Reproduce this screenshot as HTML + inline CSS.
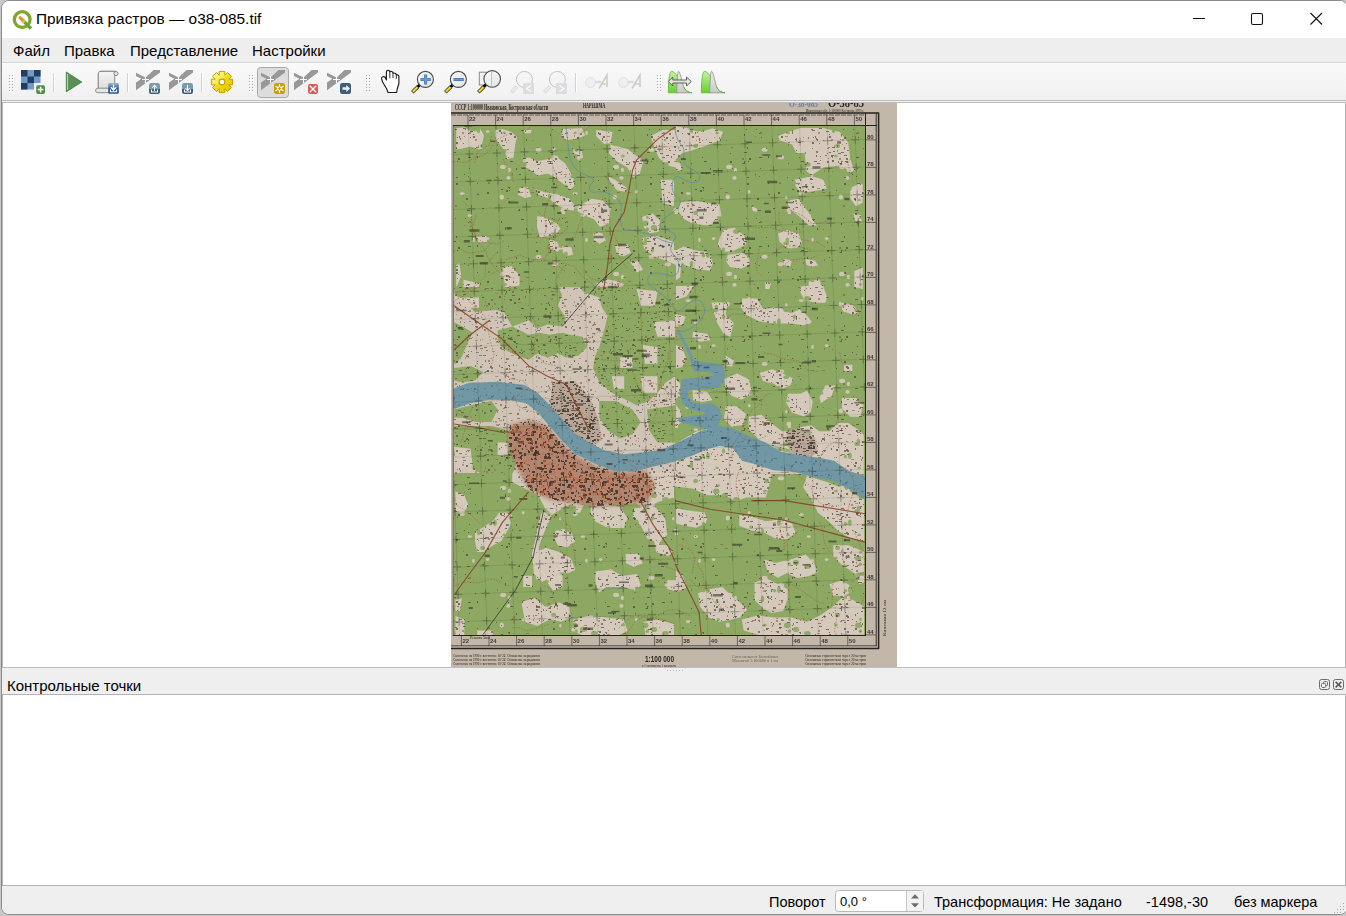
<!DOCTYPE html>
<html><head><meta charset="utf-8">
<style>
*{box-sizing:border-box}
html,body{margin:0;padding:0;width:1346px;height:916px;overflow:hidden;background:#c8c8c8;font-family:"Liberation Sans",sans-serif;color:#000}
.abs{position:absolute}
#win{position:absolute;left:1px;top:0;width:1347px;height:915px;background:#f0f0f0;border:1px solid #8a8a8a;border-radius:8px;overflow:hidden}
#title{position:absolute;left:0;top:0;width:100%;height:37px;background:#fff}
#menu{position:absolute;left:0;top:37px;width:100%;height:25px;background:#eeeeee;border-bottom:1px solid #d6d6d6}
.mi{position:absolute;top:4px;font-size:15px;line-height:17px}
#tb{position:absolute;left:0;top:62px;width:100%;height:38px;background:linear-gradient(#fafafa,#f0f0f0);border-bottom:1px solid #bdbdbd}
#canvas{position:absolute;left:0px;top:101px;width:1344px;height:566px;background:#fff;border-top:1px solid #bdbdbd;border-left:1px solid #b4b4b4;border-right:1px solid #b4b4b4;border-bottom:1px solid #bdbdbd}
#dockt{position:absolute;left:0;top:667px;width:100%;height:27px;background:#efefef}
#dockc{position:absolute;left:0px;top:693px;width:1344px;height:192px;background:#fff;border:1px solid #b4b4b4}
#status{position:absolute;left:0;top:885px;width:100%;height:30px;background:#efefef}
.st{position:absolute;top:8px;font-size:14.5px;line-height:17px;white-space:nowrap}
.grip{position:absolute;width:5px;height:18px;background-image:radial-gradient(circle,#b8b8b8 0.8px,transparent 1px);background-size:3px 3px}
.sep{position:absolute;width:1px;height:19px;top:11px;background:#d0d0d0}
</style></head><body>
<div id="win">
  <div id="title">
    <svg class="abs" style="left:10px;top:9px" width="20" height="20" viewBox="0 0 20 20">
      <circle cx="10.2" cy="9.6" r="7.9" fill="none" stroke="#80a830" stroke-width="3.3"/>
      <path d="M10.5 10 L19 18.6" stroke="#6aa33a" stroke-width="3.4" stroke-linecap="butt"/>
      <path d="M8 7.6 L11 10.6" stroke="#ef8c2c" stroke-width="3" stroke-linecap="round"/><path d="M11 10.6 L12.6 12.2" stroke="#c8d040" stroke-width="3"/>
    </svg>
    <div class="abs" style="left:34px;top:9px;font-size:15.4px;line-height:17px;white-space:nowrap">Привязка растров — o38-085.tif</div>
    <svg class="abs" style="left:1184px;top:5.3px" width="160" height="26" viewBox="0 0 160 26">
      <path d="M7 12.5 H19" stroke="#111" stroke-width="1.1"/>
      <rect x="65.5" y="7.5" width="11" height="11" rx="1.5" fill="none" stroke="#111" stroke-width="1.1"/>
      <path d="M124.5 7 L136 18.5 M136 7 L124.5 18.5" stroke="#111" stroke-width="1.1"/>
    </svg>
  </div>
  <div id="menu">
    <div class="mi" style="left:11px">Файл</div>
    <div class="mi" style="left:62px">Правка</div>
    <div class="mi" style="left:128px">Представление</div>
    <div class="mi" style="left:250px">Настройки</div>
  </div>
  <div id="tb"></div>
  <div id="canvas"></div>
  <div id="dockt">
    <div class="abs" style="left:5px;top:9px;font-size:15px;line-height:17px">Контрольные точки</div>
  </div>
  <div id="dockc"></div>
  <div id="status">
    <div class="st" style="left:767px">Поворот</div>
    <div class="st" style="left:932px">Трансформация: Не задано</div>
    <div class="st" style="left:1144px">-1498,-30</div>
    <div class="st" style="left:1232px">без маркера</div>
  </div>
</div>

<svg class="abs" style="left:0;top:660px" width="1346" height="256" viewBox="0 660 1346 256">
  <!-- splitter dots -->
  <g fill="#b4b4b4"><rect x="667" y="670" width="1" height="1"/><rect x="670" y="670" width="1" height="1"/><rect x="673" y="670" width="1" height="1"/><rect x="676" y="670" width="1" height="1"/><rect x="679" y="670" width="1" height="1"/><rect x="682" y="670" width="1" height="1"/></g>
  <!-- dock buttons -->
  <rect x="1319.5" y="679.5" width="10" height="10" rx="2" fill="none" stroke="#6a6a6a" stroke-width="1"/>
  <rect x="1323.5" y="681.5" width="4" height="4.2" rx="1" fill="none" stroke="#6a6a6a" stroke-width="1"/>
  <rect x="1321.5" y="683.3" width="4.2" height="4.2" rx="1" fill="#f4f4f4" stroke="#6a6a6a" stroke-width="1"/>
  <rect x="1333.5" y="679.5" width="10" height="10" rx="2" fill="none" stroke="#6a6a6a" stroke-width="1"/>
  <path d="M1335.6,681.8 L1341.4,687.4 M1341.4,681.8 L1335.6,687.4" stroke="#5e5e5e" stroke-width="1.6"/>
  <!-- spinbox -->
  <rect x="835.5" y="890.5" width="88" height="21" rx="3" fill="#fff" stroke="#b9b9b9" stroke-width="1"/>
  <rect x="906.5" y="891" width="16.5" height="20" fill="#f3f3f3"/>
  <path d="M906.5,891 V911" stroke="#c8c8c8" stroke-width="1"/>
  <path d="M915,894.3 L919,898.6 H911 Z M915,907.6 L919,903.3 H911 Z" fill="#6b6b6b"/>
  <text x="840" y="906" font-family="Liberation Sans" font-size="13" fill="#000">0,0 °</text>
  <!-- size grip -->
  <g fill="#a8a8a8"><rect x="1343" y="903" width="1" height="1"/><rect x="1340" y="906" width="1" height="1"/><rect x="1343" y="906" width="1" height="1"/><rect x="1337" y="909" width="1" height="1"/><rect x="1340" y="909" width="1" height="1"/><rect x="1343" y="909" width="1" height="1"/><rect x="1334" y="912" width="1" height="1"/><rect x="1337" y="912" width="1" height="1"/><rect x="1340" y="912" width="1" height="1"/></g>
</svg>

<!--MAP-->
<svg class="abs" style="left:0;top:0" width="1346" height="680" viewBox="0 0 1346 680">
<defs><filter id="soft" x="0" y="0" width="1" height="1"><feGaussianBlur stdDeviation="0.45"/></filter><filter id="tblur" x="480" y="400" width="200" height="130" filterUnits="userSpaceOnUse"><feGaussianBlur stdDeviation="2"/></filter><filter id="erode" x="445" y="95" width="460" height="580" filterUnits="userSpaceOnUse"><feMorphology operator="erode" radius="0.8"/></filter><clipPath id="mapclip"><rect x="451" y="103" width="446" height="564"/></clipPath><clipPath id="gclip"><rect x="453.5" y="125" width="412.5" height="510.5"/></clipPath><clipPath id="t3clip"><rect x="453.5" y="287" width="221.5" height="186"/></clipPath><clipPath id="lclip"><path d="M455.2,127.0 L465.6,125.9 L472.8,131.1 L481.1,127.0 L485.3,135.3 L483.2,144.6 L486.3,148.7 L479.0,150.8 L470.7,147.7 L462.4,149.8 L455.2,150.8Z M494.6,129.0 L503.9,128.0 L512.2,131.1 L518.4,136.3 L516.4,144.6 L514.3,160.1 L506.0,160.1 L503.9,151.8 L499.8,146.7 L494.6,139.4Z M521.5,129.0 L533.0,129.0 L531.9,134.2 L523.6,134.2Z M522.6,158.1 L528.8,156.0 L537.1,160.1 L547.5,158.1 L557.8,156.0 L566.1,162.2 L574.4,176.7 L575.5,187.1 L570.3,191.2 L559.9,183.0 L553.7,178.8 L547.5,174.7 L537.1,176.7 L528.8,170.5 L521.5,166.4Z M549.5,145.6 L557.8,147.7 L555.8,151.8 L551.6,151.8Z M572.4,147.7 L582.7,149.8 L584.8,160.1 L578.6,162.2 L572.4,156.0Z M562.0,128.0 L582.7,127.0 L586.9,136.3 L578.6,139.4 L566.1,141.5 L559.9,137.3Z M595.2,129.0 L613.8,131.1 L611.8,143.6 L603.5,145.6 L595.2,137.3Z M609.7,143.6 L628.3,147.7 L636.6,153.9 L644.9,160.1 L640.8,174.7 L632.5,178.8 L626.3,168.4 L615.9,162.2 L607.6,153.9Z M603.5,172.6 L615.9,178.8 L628.3,187.1 L626.3,193.3 L615.9,191.2 L609.7,183.0Z M518.4,187.1 L528.8,186.1 L533.0,197.5 L524.7,199.5 L516.4,195.4Z M533.0,187.1 L545.4,191.2 L557.8,193.3 L570.3,197.5 L576.5,205.8 L574.4,212.0 L564.1,209.9 L555.8,205.8 L547.5,199.5 L537.1,195.4Z M536.1,215.1 L545.4,216.1 L557.8,222.4 L562.0,228.6 L557.8,234.8 L547.5,236.9 L539.2,238.9 L536.1,228.6Z M547.5,236.9 L557.8,241.0 L562.0,249.3 L557.8,253.5 L549.5,249.3Z M560.9,245.2 L572.4,246.2 L574.4,255.5 L566.1,257.6 L562.0,253.5Z M576.5,205.8 L591.0,197.5 L603.5,199.5 L611.8,207.8 L609.7,224.4 L599.3,228.6 L593.1,220.3 L582.7,216.1 L576.5,212.0Z M591.0,228.6 L603.5,232.7 L607.6,241.0 L599.3,245.2 L593.1,241.0Z M613.8,245.2 L628.3,243.1 L632.5,253.5 L624.2,257.6 L615.9,255.5Z M640.8,216.1 L653.2,212.0 L661.5,220.3 L659.5,232.7 L649.1,234.8 L642.9,228.6Z M649.1,135.3 L661.5,129.0 L675.0,129.0 L675.0,168.4 L665.7,166.4 L657.4,158.1 L653.2,147.7Z M659.5,178.8 L675.0,178.8 L675.0,207.8 L661.5,203.7Z M640.8,236.9 L657.4,234.8 L675.0,241.0 L675.0,265.9 L665.7,261.8 L653.2,257.6 L642.9,249.3Z M455.2,263.8 L460.4,261.8 L462.4,276.3 L458.3,286.6 L455.2,288.7Z M501.8,265.9 L512.2,264.9 L520.5,274.2 L520.5,286.6 L503.9,288.7Z M462.4,278.3 L481.1,282.5 L479.0,290.0 L462.4,290.0Z M595.2,282.5 L607.6,278.3 L620.1,280.4 L622.1,290.0 L595.2,290.0Z M474.9,235.8 L487.3,234.8 L488.4,243.1 L477.0,243.1Z M628.3,261.8 L638.7,259.7 L644.9,270.1 L636.6,274.2Z M675.0,124.9 L687.4,127.0 L699.9,131.1 L712.3,127.0 L724.8,131.1 L720.6,141.5 L704.0,147.7 L691.6,151.8 L683.3,153.9 L675.0,162.2Z M675.0,160.1 L681.2,162.2 L683.3,170.5 L677.1,172.6 L675.0,170.5Z M776.6,135.3 L787.0,131.1 L799.4,127.0 L824.3,127.0 L840.9,131.1 L849.2,141.5 L851.3,158.1 L855.4,170.5 L851.3,174.7 L840.9,166.4 L824.3,168.4 L811.9,176.7 L805.7,172.6 L803.6,153.9 L795.3,153.9 L791.1,145.6 L778.7,141.5Z M793.2,178.8 L803.6,176.7 L811.9,174.7 L824.3,178.8 L828.5,189.2 L820.2,191.2 L807.7,193.3 L797.4,191.2 L793.2,185.0Z M787.0,199.5 L799.4,197.5 L809.8,212.0 L816.0,222.4 L820.2,226.5 L807.7,226.5 L799.4,218.2 L791.1,212.0 L787.0,205.8Z M679.1,201.6 L693.7,199.5 L706.1,201.6 L720.6,203.7 L722.7,216.1 L716.5,224.4 L706.1,226.5 L691.6,224.4 L683.3,220.3 L677.1,212.0Z M749.7,203.7 L758.0,207.8 L758.0,213.0 L751.7,212.0Z M722.7,228.6 L735.1,226.5 L745.5,234.8 L747.6,245.2 L735.1,251.4 L722.7,253.5 L716.5,245.2 L718.6,236.9Z M776.6,232.7 L787.0,228.6 L799.4,232.7 L803.6,243.1 L797.4,249.3 L787.0,249.3 L778.7,243.1Z M683.3,245.2 L695.7,249.3 L710.3,251.4 L714.4,263.8 L710.3,272.1 L695.7,270.1 L683.3,265.9 L679.1,255.5Z M726.8,253.5 L743.4,251.4 L751.7,257.6 L749.7,265.9 L741.4,270.1 L728.9,268.0 L724.8,261.8Z M803.6,257.6 L816.0,259.7 L820.2,265.9 L811.9,268.0 L805.7,265.9Z M849.2,187.1 L857.5,183.0 L863.7,183.0 L863.7,203.7 L855.4,207.8 L849.2,199.5Z M851.3,212.0 L861.6,214.1 L863.7,224.4 L855.4,224.4Z M764.2,280.4 L772.5,282.5 L770.4,290.0 L764.2,290.0Z M807.7,280.4 L820.2,278.3 L824.3,290.0 L807.7,290.0Z M853.3,270.1 L863.7,265.9 L863.7,290.0 L853.3,290.0Z M675.0,249.3 L683.3,245.2 L681.2,278.3 L675.0,282.5Z M782.8,257.6 L793.2,259.7 L791.1,268.0 L782.8,265.9Z M675.0,285.0 L695.7,285.0 L687.4,297.4 L675.0,301.6Z M675.0,312.0 L687.4,316.1 L683.3,326.5 L675.0,328.6Z M710.3,301.6 L728.9,301.6 L726.8,314.0 L735.1,322.3 L731.0,338.9 L722.7,334.8 L716.5,324.4 L712.3,312.0Z M741.4,297.4 L758.0,297.4 L764.2,307.8 L778.7,305.7 L791.1,312.0 L799.4,307.8 L807.7,314.0 L813.9,322.3 L803.6,326.5 L791.1,324.4 L772.5,324.4 L758.0,322.3 L745.5,316.1 L739.3,307.8Z M799.4,285.0 L824.3,285.0 L828.5,297.4 L826.4,303.7 L816.0,303.7 L803.6,301.6 L799.4,293.3Z M675.0,343.1 L683.3,347.2 L687.4,357.6 L683.3,368.0 L675.0,370.0Z M691.6,330.6 L708.2,332.7 L712.3,341.0 L699.9,343.1 L691.6,338.9Z M724.8,353.4 L735.1,359.7 L733.1,368.0 L722.7,365.9Z M758.0,372.1 L772.5,368.0 L782.8,372.1 L795.3,378.3 L791.1,386.6 L780.8,390.8 L772.5,384.5 L762.1,382.5Z M722.7,378.3 L737.2,372.1 L749.7,378.3 L753.8,394.9 L741.4,401.1 L731.0,397.0 L724.8,390.8Z M691.6,388.7 L708.2,390.8 L714.4,401.1 L702.0,403.2 L691.6,401.1Z M787.0,392.8 L799.4,392.8 L807.7,388.7 L813.9,401.1 L811.9,413.6 L803.6,417.7 L791.1,413.6 L784.9,403.2Z M724.8,405.3 L737.2,405.3 L747.6,413.6 L743.4,426.0 L731.0,428.1 L722.7,419.8Z M747.6,415.7 L762.1,413.6 L772.5,421.9 L782.8,430.2 L791.1,430.2 L799.4,426.0 L811.9,423.9 L820.2,430.2 L828.5,430.2 L836.8,421.9 L849.2,421.9 L861.6,430.2 L864.8,434.3 L864.8,475.0 L851.3,475.0 L840.9,467.5 L824.3,461.3 L807.7,457.1 L791.1,450.9 L774.5,446.8 L758.0,440.5 L747.6,430.2Z M824.3,384.5 L836.8,384.5 L832.6,397.0 L820.2,405.3 L818.1,397.0Z M840.9,397.0 L857.5,397.0 L863.7,405.3 L861.6,417.7 L849.2,417.7 L840.9,409.4Z M840.9,301.6 L853.3,303.7 L861.6,312.0 L853.3,316.1 L840.9,312.0Z M843.0,363.8 L853.3,363.8 L853.3,372.1 L843.0,372.1Z M675.0,376.2 L681.2,382.5 L681.2,397.0 L675.0,401.1Z M675.0,442.6 L695.7,430.2 L716.5,426.0 L737.2,430.2 L758.0,440.5 L778.7,448.8 L799.4,454.0 L820.2,461.3 L847.1,470.6 L857.5,475.0 L675.0,475.0Z M675.0,401.1 L681.2,409.4 L683.3,421.9 L675.0,430.2Z M454.4,489.7 L465.3,494.0 L469.7,504.9 L465.3,513.7 L454.4,513.7Z M474.0,531.2 L491.5,520.2 L500.2,509.3 L513.3,513.7 L511.2,526.8 L502.4,542.1 L493.7,546.5 L484.9,553.0 L476.2,553.0 L474.0,542.1Z M511.2,470.0 L675.0,470.0 L675.0,498.4 L659.7,502.8 L646.6,509.3 L635.7,504.9 L616.0,502.8 L602.9,507.1 L585.4,502.8 L572.3,504.9 L563.6,509.3 L552.7,515.9 L543.9,509.3 L537.4,496.2 L524.3,489.7 L511.2,483.1Z M589.8,504.9 L620.4,504.9 L629.1,518.1 L624.7,529.0 L607.3,529.0 L594.2,522.4 L589.8,513.7Z M633.5,507.1 L655.3,504.9 L666.3,518.1 L668.4,535.5 L659.7,544.3 L646.6,539.9 L640.0,526.8 L631.3,518.1Z M653.1,542.1 L668.4,544.3 L675.0,553.0 L668.4,557.4 L655.3,553.0Z M554.8,529.0 L572.3,531.2 L576.7,542.1 L568.0,548.6 L557.0,546.5 L552.7,537.7Z M530.8,553.0 L546.1,546.5 L559.2,550.8 L572.3,557.4 L576.7,570.5 L568.0,574.8 L559.2,572.7 L550.5,579.2 L541.7,583.6 L533.0,574.8Z M554.8,570.5 L563.6,574.8 L563.6,588.0 L552.7,592.3 L546.1,583.6Z M519.9,601.1 L535.2,596.7 L546.1,605.4 L559.2,601.1 L570.1,605.4 L572.3,618.5 L561.4,622.9 L550.5,620.7 L537.4,627.3 L524.3,622.9Z M522.1,574.8 L533.0,574.8 L533.0,588.0 L522.1,588.0Z M594.2,570.5 L611.6,568.3 L622.6,574.8 L637.9,572.7 L642.2,585.8 L635.7,592.3 L622.6,588.0 L607.3,588.0 L598.5,594.5 L594.2,583.6Z M624.7,553.0 L640.0,553.0 L644.4,563.9 L633.5,568.3 L624.7,563.9Z M572.3,618.5 L589.8,614.2 L607.3,616.4 L624.7,618.5 L629.1,631.6 L620.4,636.0 L602.9,636.0 L581.1,636.0 L570.1,631.6Z M454.4,598.9 L463.1,596.7 L460.9,612.0 L454.4,612.0Z M454.4,614.2 L465.3,618.5 L465.3,636.0 L454.4,636.0Z M666.3,579.2 L675.0,579.2 L675.0,592.3 L666.3,590.1Z M642.2,620.7 L657.5,618.5 L675.0,622.9 L675.0,636.0 L644.4,636.0Z M476.2,629.5 L493.7,629.5 L493.7,636.0 L476.2,636.0Z M572.3,500.6 L585.4,504.9 L581.1,513.7 L572.3,513.7Z M541.7,509.3 L552.7,515.9 L546.1,531.2 L541.7,542.1 L537.4,557.4 L530.8,553.0 L535.2,535.5 L537.4,520.2Z M675.0,470.0 L773.3,470.0 L771.1,483.1 L766.7,498.4 L747.1,498.4 L736.2,502.8 L723.1,496.2 L705.6,496.2 L692.5,489.7 L675.0,487.5Z M806.1,474.4 L827.9,480.9 L849.7,489.7 L865.0,498.4 L865.0,542.1 L849.7,539.9 L836.6,531.2 L827.9,522.4 L817.0,513.7 L810.4,500.6 L801.7,487.5Z M675.0,507.1 L688.1,509.3 L705.6,511.5 L709.9,522.4 L696.8,529.0 L683.7,526.8 L675.0,524.6Z M738.3,513.7 L753.6,515.9 L766.7,520.2 L779.8,518.1 L793.0,522.4 L797.3,533.3 L788.6,539.9 L775.5,539.9 L762.4,533.3 L749.3,531.2 L738.3,526.8Z M832.3,544.3 L849.7,544.3 L865.0,550.8 L865.0,572.7 L854.1,574.8 L841.0,566.1 L832.3,557.4Z M762.4,557.4 L775.5,561.7 L793.0,557.4 L806.1,553.0 L814.8,561.7 L819.2,572.7 L810.4,577.0 L797.3,579.2 L786.4,574.8 L777.7,579.2 L766.7,572.7Z M675.0,568.3 L683.7,574.8 L688.1,588.0 L679.4,592.3 L675.0,592.3Z M696.8,592.3 L709.9,588.0 L723.1,585.8 L731.8,594.5 L740.5,601.1 L749.3,609.8 L740.5,618.5 L731.8,620.7 L718.7,622.9 L707.8,618.5 L699.0,607.6Z M753.6,581.4 L766.7,577.0 L779.8,583.6 L788.6,588.0 L788.6,601.1 L784.2,612.0 L771.1,614.2 L762.4,609.8 L753.6,601.1Z M740.5,618.5 L758.0,614.2 L775.5,616.4 L793.0,616.4 L806.1,620.7 L819.2,614.2 L832.3,605.4 L841.0,596.7 L854.1,598.9 L865.0,605.4 L865.0,636.0 L827.9,636.0 L784.2,636.0 L758.0,636.0 L742.7,631.6Z M827.9,583.6 L841.0,579.2 L849.7,583.6 L854.1,592.3 L845.4,596.7 L832.3,596.7Z M854.1,574.8 L865.0,574.8 L865.0,583.6 L858.5,585.8Z"/></clipPath><clipPath id="l3clip"><path d="M636.6,289.1 L657.4,291.2 L655.3,305.7 L640.8,305.7Z M653.2,322.3 L675.0,320.3 L675.0,336.8 L657.4,336.8Z M620.1,357.6 L632.5,357.6 L632.5,368.0 L620.1,368.0Z M642.9,345.1 L657.4,347.2 L657.4,363.8 L644.9,363.8Z M611.8,376.2 L624.2,376.2 L624.2,388.7 L613.8,388.7Z M640.8,376.2 L657.4,376.2 L657.4,392.8 L642.9,392.8Z M586.9,293.3 L599.3,297.4 L603.5,314.0 L595.2,320.3 L586.9,309.9Z M454.1,446.8 L470.7,448.8 L472.8,467.5 L456.2,467.5Z M497.7,442.6 L508.1,442.6 L508.1,455.1 L497.7,455.1Z M458.3,297.4 L479.0,297.4 L479.0,307.8 L462.4,307.8Z"/></clipPath><clipPath id="tclip"><path d="M510.0,425.0 L530.0,420.0 L545.0,425.0 L556.0,436.0 L566.0,448.0 L580.0,458.0 L600.0,468.0 L625.0,472.0 L645.0,470.0 L655.0,485.0 L648.0,503.0 L620.0,505.0 L595.0,506.0 L572.0,503.0 L550.0,500.0 L530.0,490.0 L518.0,470.0 L508.0,445.0Z"/></clipPath><clipPath id="dclip"><path d="M553.0,382.0 L575.0,381.0 L590.0,398.0 L598.0,418.0 L602.0,440.0 L590.0,447.0 L575.0,437.0 L562.0,422.0 L550.0,405.0Z M786.0,432.0 L800.0,428.0 L815.0,438.0 L818.0,452.0 L806.0,460.0 L790.0,456.0Z"/></clipPath><pattern id="fragL" x="0" y="0" width="113" height="107" patternUnits="userSpaceOnUse"><g fill="#d5c9bc"><ellipse cx="51.1" cy="59.9" rx="3.0" ry="2.1"/><ellipse cx="57.4" cy="62.9" rx="1.6" ry="2.2"/><ellipse cx="71.2" cy="84.8" rx="1.4" ry="1.8"/><ellipse cx="10.2" cy="86.6" rx="2.6" ry="1.3"/><ellipse cx="111.0" cy="103.2" rx="2.5" ry="2.4"/><ellipse cx="17.8" cy="1.6" rx="2.3" ry="1.3"/><ellipse cx="21.5" cy="25.9" rx="1.3" ry="2.1"/><ellipse cx="49.8" cy="90.1" rx="2.2" ry="2.5"/><ellipse cx="56.5" cy="70.9" rx="2.1" ry="1.8"/><ellipse cx="112.7" cy="106.5" rx="2.9" ry="2.6"/><ellipse cx="35.6" cy="24.6" rx="1.8" ry="1.3"/><ellipse cx="86.6" cy="42.8" rx="2.9" ry="2.0"/><ellipse cx="108.3" cy="90.7" rx="1.2" ry="1.6"/><ellipse cx="102.9" cy="50.3" rx="3.2" ry="2.0"/></g></pattern><pattern id="fragG" x="0" y="0" width="71" height="67" patternUnits="userSpaceOnUse"><g fill="#8ca862"><ellipse cx="5.2" cy="42.2" rx="2.9" ry="1.9"/><ellipse cx="6.2" cy="22.3" rx="3.3" ry="2.9"/><ellipse cx="8.4" cy="16.5" rx="1.5" ry="1.4"/><ellipse cx="56.6" cy="11.9" rx="2.5" ry="2.2"/><ellipse cx="13.5" cy="49.0" rx="1.6" ry="2.7"/><ellipse cx="8.3" cy="28.2" rx="1.7" ry="1.9"/><ellipse cx="68.9" cy="53.8" rx="1.9" ry="3.2"/><ellipse cx="15.0" cy="26.4" rx="3.1" ry="2.6"/><ellipse cx="7.1" cy="66.3" rx="1.7" ry="1.8"/><ellipse cx="54.9" cy="22.0" rx="1.9" ry="1.5"/><ellipse cx="6.4" cy="39.0" rx="1.8" ry="2.6"/><ellipse cx="26.4" cy="30.4" rx="3.3" ry="2.3"/><ellipse cx="40.8" cy="58.1" rx="1.7" ry="1.6"/><ellipse cx="64.5" cy="54.8" rx="1.8" ry="1.7"/><ellipse cx="52.5" cy="63.0" rx="1.7" ry="3.3"/></g></pattern><pattern id="spW" x="0" y="0" width="59" height="43" patternUnits="userSpaceOnUse"><path d="M56,30h2v2h-2zM26,3h1v1h-1zM2,32h2v1h-2zM33,11h3v1h-3zM41,39h2v2h-2zM28,15h1v1h-1zM46,33h2v2h-2zM19,20h1v1h-1zM38,5h1v2h-1zM42,31h2v1h-2zM39,12h2v2h-2zM14,37h2v1h-2zM53,2h3v1h-3zM28,20h1v1h-1zM19,41h2v2h-2zM12,1h2v1h-2zM16,11h3v1h-3zM33,32h2v2h-2zM29,12h3v1h-3zM20,41h1v1h-1zM46,41h3v1h-3zM13,15h1v2h-1zM58,1h1v1h-1zM21,8h1v2h-1zM42,24h2v2h-2zM17,36h1v2h-1zM0,38h1v2h-1z" fill="#4f6f90"/><path d="M47,25h2v1h-2zM52,38h1v2h-1zM1,4h2v1h-2zM36,8h1v1h-1zM37,2h1v1h-1zM58,22h3v1h-3zM4,28h2v2h-2zM45,8h2v1h-2zM5,30h1v1h-1zM0,39h3v1h-3zM37,29h1v2h-1zM48,32h1v1h-1zM48,21h3v1h-3zM31,15h2v1h-2zM27,12h1v1h-1zM8,8h1v2h-1zM17,10h1v1h-1zM30,17h1v1h-1zM24,40h2v2h-2zM45,17h2v2h-2zM41,8h1v2h-1zM34,41h3v1h-3zM4,12h1v1h-1zM2,11h1v1h-1zM25,14h1v1h-1zM57,24h1v1h-1zM56,32h2v1h-2zM19,34h2v1h-2zM5,2h1v2h-1zM35,26h2v1h-2zM53,35h2v1h-2z" fill="#5a7a98"/><path d="M8,14h1v2h-1zM17,13h1v1h-1zM11,18h2v1h-2zM8,28h2v1h-2zM2,1h2v2h-2zM4,30h1v1h-1zM47,2h3v1h-3zM50,1h1v2h-1zM24,37h1v1h-1zM4,5h1v1h-1zM7,16h1v2h-1zM21,24h3v1h-3zM53,34h1v1h-1zM14,7h1v2h-1zM23,19h1v1h-1zM42,16h1v1h-1zM43,20h3v1h-3zM17,38h1v1h-1zM49,9h1v1h-1zM7,28h1v1h-1zM48,30h2v2h-2zM49,22h2v2h-2zM24,35h2v2h-2zM58,1h2v1h-2zM27,2h1v1h-1zM33,33h3v1h-3zM28,31h2v2h-2zM5,14h1v2h-1zM35,18h3v1h-3zM40,10h2v2h-2zM19,9h2v2h-2zM26,34h1v1h-1z" fill="#3f5f80"/></pattern><pattern id="spG" x="0" y="0" width="97" height="89" patternUnits="userSpaceOnUse"><path d="M68,5h2v2h-2zM69,72h1v1h-1zM11,88h1v1h-1zM68,58h1v2h-1zM34,31h1v2h-1zM16,43h1v2h-1zM67,40h1v1h-1zM53,79h1v1h-1zM16,2h1v1h-1zM36,41h3v1h-3zM31,79h1v2h-1zM79,32h3v1h-3zM89,67h1v2h-1zM78,20h2v2h-2zM80,68h3v1h-3zM80,44h1v1h-1zM77,40h1v1h-1zM24,12h1v1h-1zM16,11h2v1h-2zM90,16h1v1h-1zM80,87h1v1h-1zM25,72h3v1h-3zM24,9h1v2h-1zM65,72h1v2h-1zM24,23h1v1h-1zM12,74h1v1h-1zM87,59h1v1h-1zM41,50h1v2h-1zM65,45h1v2h-1zM89,5h1v1h-1zM21,12h2v2h-2zM51,72h2v2h-2zM64,74h2v1h-2zM20,51h1v1h-1zM68,88h2v1h-2zM23,9h2v1h-2zM60,12h1v1h-1zM81,79h1v1h-1zM34,85h2v1h-2zM23,68h1v1h-1zM65,63h3v1h-3zM2,14h2v2h-2zM94,30h2v1h-2zM51,64h1v1h-1zM82,48h1v1h-1zM33,32h2v1h-2zM70,69h2v2h-2zM76,85h1v1h-1zM20,49h1v2h-1z" fill="#3a3826"/><path d="M19,29h1v1h-1zM63,74h1v1h-1zM48,81h1v2h-1zM67,27h2v2h-2zM75,17h1v1h-1zM12,55h1v2h-1zM46,14h3v1h-3zM81,43h2v2h-2zM3,4h2v2h-2zM22,20h2v1h-2zM76,47h1v1h-1zM52,58h2v1h-2zM47,51h1v1h-1zM41,10h3v1h-3zM35,14h3v1h-3zM23,51h1v1h-1zM27,84h1v2h-1zM89,15h1v2h-1zM66,72h1v1h-1zM56,82h1v1h-1zM63,69h2v2h-2z" fill="#8a5a3a"/></pattern><pattern id="spL" x="0" y="0" width="89" height="83" patternUnits="userSpaceOnUse"><path d="M84,37h1v1h-1zM31,74h1v1h-1zM32,31h1v1h-1zM59,18h1v1h-1zM16,30h1v2h-1zM35,34h2v2h-2zM81,35h1v1h-1zM31,64h3v1h-3zM87,5h3v1h-3zM3,79h1v1h-1zM28,69h2v1h-2zM11,20h2v2h-2zM63,17h1v1h-1zM54,33h1v2h-1zM37,70h3v1h-3zM54,47h2v2h-2zM59,41h1v1h-1zM87,59h2v1h-2zM9,39h1v1h-1zM84,41h2v1h-2zM40,28h1v2h-1zM10,46h2v1h-2zM69,19h2v2h-2zM2,28h2v2h-2zM69,10h2v1h-2zM35,13h2v1h-2zM3,81h3v1h-3zM12,54h1v1h-1zM68,9h3v1h-3zM11,59h2v2h-2zM67,46h3v1h-3zM14,53h1v2h-1zM87,21h2v1h-2zM14,38h3v1h-3zM22,7h1v2h-1zM23,35h1v2h-1zM28,51h1v1h-1zM77,20h1v2h-1zM41,18h2v1h-2zM81,79h2v1h-2zM19,73h1v1h-1zM26,19h1v1h-1zM45,34h2v2h-2zM2,24h1v2h-1zM87,11h1v2h-1zM59,8h2v1h-2zM86,59h3v1h-3zM60,30h2v1h-2zM58,1h3v1h-3zM71,11h2v1h-2zM25,48h3v1h-3zM11,13h1v1h-1zM16,80h3v1h-3zM23,24h1v2h-1zM59,75h3v1h-3zM12,29h1v1h-1zM15,55h1v2h-1zM43,54h2v2h-2zM61,42h1v2h-1zM31,77h2v2h-2zM13,78h3v1h-3zM32,68h2v1h-2zM45,78h2v2h-2zM73,25h2v2h-2zM72,3h3v1h-3zM59,15h1v2h-1zM30,72h2v2h-2zM76,18h1v1h-1zM21,23h2v2h-2zM58,4h1v2h-1zM78,75h3v1h-3zM15,72h1v2h-1zM31,72h2v1h-2zM82,4h3v1h-3zM51,63h2v2h-2zM55,15h2v2h-2zM53,3h2v1h-2zM76,41h2v1h-2zM31,15h1v2h-1zM88,13h2v2h-2zM69,53h2v2h-2zM28,53h2v2h-2zM9,12h2v2h-2zM3,41h1v1h-1zM18,45h3v1h-3zM18,60h1v1h-1zM45,60h1v1h-1zM81,71h1v1h-1zM24,6h3v1h-3zM53,10h1v1h-1zM39,15h3v1h-3zM34,23h3v1h-3zM84,67h1v1h-1zM38,23h3v1h-3zM35,16h3v1h-3zM59,9h1v2h-1zM68,32h1v2h-1zM21,36h1v1h-1zM22,35h3v1h-3zM64,81h3v1h-3zM30,33h1v2h-1zM4,25h2v2h-2zM3,9h1v1h-1zM72,81h2v2h-2zM88,76h1v2h-1zM66,5h1v1h-1zM52,67h1v1h-1zM54,9h1v1h-1zM37,32h1v1h-1zM53,59h1v1h-1zM46,39h2v1h-2zM5,20h1v2h-1zM43,72h3v1h-3zM44,31h1v1h-1zM61,26h1v2h-1zM57,62h3v1h-3zM46,35h2v2h-2zM65,50h2v2h-2z" fill="#3a2e26"/><path d="M36,67h1v2h-1zM83,34h2v2h-2zM52,49h1v1h-1zM50,6h2v2h-2zM15,26h1v1h-1zM67,19h1v1h-1zM46,67h1v1h-1zM64,39h2v2h-2zM45,26h2v1h-2zM47,19h3v1h-3zM88,38h1v2h-1zM36,18h1v1h-1zM41,56h2v2h-2zM22,11h1v2h-1zM69,20h2v2h-2zM2,54h1v1h-1zM50,44h2v1h-2zM49,54h2v2h-2zM35,7h1v2h-1zM74,61h1v1h-1zM13,25h1v1h-1zM33,62h1v2h-1zM17,49h2v2h-2zM61,59h1v1h-1zM20,39h2v1h-2zM51,9h2v2h-2zM51,78h3v1h-3zM33,42h1v1h-1zM26,65h2v1h-2zM73,53h3v1h-3zM42,11h2v1h-2zM71,33h1v1h-1zM36,46h1v1h-1zM43,66h1v1h-1zM30,8h3v1h-3zM0,37h1v1h-1zM37,7h1v1h-1zM64,37h2v1h-2zM67,5h1v1h-1zM7,23h1v1h-1zM41,61h1v1h-1zM30,56h2v2h-2zM74,77h1v2h-1zM73,57h1v1h-1zM55,64h1v2h-1zM79,18h1v1h-1zM54,5h3v1h-3zM40,52h1v2h-1zM53,9h1v1h-1zM66,23h3v1h-3z" fill="#9a6048"/><path d="M7,54h1v2h-1zM46,67h2v1h-2zM9,28h1v2h-1zM6,79h1v2h-1zM56,17h3v1h-3zM58,76h2v1h-2zM1,34h2v1h-2zM80,47h1v2h-1zM57,79h1v1h-1zM55,72h2v2h-2zM56,67h2v1h-2zM46,50h2v2h-2zM24,72h2v1h-2zM62,66h2v1h-2zM86,17h1v2h-1zM52,44h1v1h-1zM31,20h3v1h-3zM27,75h1v1h-1zM76,65h1v1h-1zM39,80h2v2h-2zM84,70h1v1h-1zM7,30h1v1h-1zM47,57h1v1h-1zM4,69h1v2h-1zM87,17h1v1h-1zM83,56h1v1h-1zM78,19h2v1h-2zM69,38h2v1h-2zM42,39h2v1h-2zM81,42h1v2h-1zM82,26h1v1h-1zM39,56h1v1h-1zM10,17h1v1h-1zM84,17h2v1h-2zM20,25h1v2h-1zM4,18h2v2h-2zM60,44h1v2h-1zM36,62h1v2h-1zM67,42h2v2h-2zM37,78h1v2h-1zM64,50h1v1h-1zM69,39h3v1h-3zM15,68h2v2h-2zM56,57h2v2h-2zM5,39h1v1h-1zM40,39h2v1h-2zM39,40h2v1h-2zM17,42h3v1h-3zM23,19h1v1h-1zM74,49h1v1h-1zM76,21h1v1h-1zM19,77h1v1h-1zM79,67h2v1h-2zM11,65h1v1h-1zM32,31h1v1h-1zM27,5h1v1h-1zM76,17h1v1h-1zM50,71h2v1h-2zM59,50h1v1h-1zM48,6h1v1h-1zM76,59h2v1h-2zM62,26h2v2h-2z" fill="#5a4a40"/></pattern><pattern id="spT" x="0" y="0" width="53" height="47" patternUnits="userSpaceOnUse"><path d="M17,6h1v2h-1zM49,15h2v2h-2zM20,24h3v2h-3zM24,20h1v2h-1zM32,38h2v1h-2zM13,19h3v2h-3zM20,46h3v2h-3zM9,13h1v2h-1zM2,1h3v2h-3zM35,44h1v2h-1zM5,27h2v2h-2zM31,3h3v2h-3zM33,5h1v2h-1zM44,35h1v2h-1zM25,7h1v2h-1zM25,17h2v2h-2zM31,37h1v2h-1zM46,20h1v2h-1zM52,42h2v1h-2zM1,36h2v1h-2zM40,3h2v3h-2zM4,29h3v2h-3zM19,31h1v2h-1zM15,33h2v2h-2zM0,15h2v3h-2zM16,22h2v2h-2zM20,45h2v1h-2zM10,21h2v3h-2zM26,18h1v2h-1zM7,28h2v3h-2zM2,10h2v3h-2zM41,11h2v2h-2zM40,42h3v2h-3zM18,22h2v3h-2zM25,21h2v2h-2zM25,46h2v3h-2zM48,9h2v3h-2zM6,35h1v2h-1zM20,14h2v2h-2zM35,3h2v1h-2zM0,19h2v2h-2zM50,12h3v2h-3zM2,26h1v2h-1zM51,28h2v3h-2zM11,1h2v1h-2zM1,35h1v2h-1zM51,15h3v2h-3zM19,34h2v2h-2zM13,11h2v1h-2zM22,11h3v2h-3zM0,25h2v3h-2zM1,11h1v2h-1zM27,30h2v1h-2zM11,22h2v3h-2zM9,46h3v2h-3zM28,45h3v2h-3zM7,44h3v2h-3zM42,29h3v2h-3zM32,14h3v2h-3zM32,2h2v3h-2zM28,18h2v3h-2zM47,30h2v3h-2zM3,8h3v2h-3zM14,11h2v1h-2zM16,4h2v1h-2zM29,13h2v3h-2zM41,15h2v2h-2zM4,31h2v2h-2zM14,18h2v2h-2zM11,39h3v2h-3zM43,39h3v2h-3zM46,12h2v3h-2zM10,44h2v3h-2zM2,8h1v2h-1zM19,12h2v2h-2zM4,40h1v2h-1zM29,8h2v3h-2zM6,22h2v3h-2zM15,31h2v3h-2zM18,7h1v2h-1zM30,24h2v1h-2zM38,14h3v2h-3zM37,16h3v2h-3zM17,21h2v2h-2zM34,42h2v2h-2zM13,5h1v2h-1zM52,1h2v1h-2zM4,23h2v1h-2zM32,20h3v2h-3zM14,1h3v2h-3zM14,41h2v3h-2zM3,4h3v2h-3zM31,23h2v1h-2zM42,46h3v2h-3zM27,29h2v1h-2zM23,23h2v2h-2zM22,26h2v3h-2zM49,6h1v2h-1zM37,26h3v2h-3zM36,33h2v1h-2zM39,39h2v2h-2zM18,33h2v3h-2zM34,41h2v2h-2zM16,34h2v2h-2zM36,32h2v2h-2zM14,23h2v2h-2zM41,27h1v2h-1zM7,3h1v2h-1zM2,20h1v2h-1zM14,33h2v3h-2zM46,0h1v2h-1zM19,13h2v3h-2zM20,11h3v2h-3zM33,22h2v2h-2zM51,27h1v2h-1zM5,18h2v3h-2zM3,31h2v2h-2zM37,34h2v2h-2zM24,28h3v2h-3zM28,20h2v2h-2zM22,42h2v3h-2zM44,41h2v3h-2zM17,30h3v2h-3zM27,24h2v1h-2zM31,27h3v2h-3zM41,22h3v2h-3zM28,36h2v3h-2zM22,37h2v1h-2zM45,25h1v2h-1zM22,46h3v2h-3zM16,4h1v2h-1zM15,45h2v1h-2zM26,33h3v2h-3zM36,10h2v3h-2zM21,31h2v1h-2zM48,22h1v2h-1zM34,39h1v2h-1zM7,15h1v2h-1zM41,34h2v1h-2zM4,35h2v2h-2zM19,0h2v2h-2zM43,33h2v3h-2zM27,33h2v1h-2zM33,44h1v2h-1zM12,45h2v2h-2zM8,31h2v1h-2zM44,31h2v2h-2zM34,9h3v2h-3zM19,1h3v2h-3zM9,11h2v3h-2zM21,14h1v2h-1zM0,15h1v2h-1zM33,43h1v2h-1zM47,46h2v1h-2zM50,15h2v3h-2zM28,13h2v2h-2zM35,37h2v2h-2zM52,0h2v2h-2zM2,24h2v2h-2zM51,45h1v2h-1z" fill="#3a2a22"/><path d="M9,46h1v2h-1zM19,25h2v3h-2zM31,2h2v1h-2zM22,39h2v1h-2zM51,19h2v2h-2zM14,10h3v2h-3zM30,10h1v2h-1zM1,9h2v3h-2zM17,14h1v2h-1zM43,10h2v1h-2zM20,45h2v1h-2zM45,43h1v2h-1zM21,13h2v3h-2zM51,10h2v1h-2zM24,39h1v2h-1zM43,8h2v2h-2zM45,7h2v2h-2zM28,41h1v2h-1zM51,9h3v2h-3zM1,17h2v3h-2zM11,21h3v2h-3zM17,12h1v2h-1zM32,29h2v2h-2zM39,1h2v2h-2zM25,6h1v2h-1zM38,3h1v2h-1zM47,39h1v2h-1zM35,28h3v2h-3zM50,9h1v2h-1zM40,17h2v3h-2zM44,13h2v1h-2zM49,26h2v1h-2zM43,41h3v2h-3zM42,44h2v2h-2zM0,26h1v2h-1zM50,41h2v1h-2zM6,5h2v2h-2zM4,36h2v1h-2zM18,22h2v1h-2zM13,37h3v2h-3zM35,6h3v2h-3zM6,32h2v1h-2zM52,0h2v1h-2zM51,7h3v2h-3zM26,19h2v2h-2zM21,31h2v1h-2zM21,2h1v2h-1zM39,5h2v3h-2zM21,40h2v2h-2zM26,21h2v2h-2zM50,5h3v2h-3zM34,8h2v2h-2zM12,0h1v2h-1zM39,4h2v3h-2zM31,7h2v1h-2zM15,9h2v1h-2zM10,12h2v3h-2zM18,16h2v3h-2zM1,18h1v2h-1zM24,10h2v3h-2zM39,5h2v3h-2zM36,46h1v2h-1zM9,3h2v2h-2zM1,26h2v3h-2zM14,44h1v2h-1zM10,5h2v3h-2zM0,23h2v2h-2zM41,15h3v2h-3zM5,43h2v3h-2zM4,4h3v2h-3zM10,9h2v2h-2zM21,8h2v1h-2zM12,15h2v1h-2z" fill="#8a4a30"/><path d="M30,34h2v1h-2zM25,8h3v2h-3zM14,6h1v2h-1zM49,23h2v1h-2zM21,18h3v2h-3zM51,9h3v2h-3zM1,2h1v2h-1zM23,36h1v2h-1zM24,39h1v2h-1zM39,26h2v2h-2zM24,2h2v1h-2zM41,35h2v2h-2zM51,36h1v2h-1zM15,41h2v1h-2zM4,4h2v2h-2zM30,3h1v2h-1zM25,32h3v2h-3zM45,40h1v2h-1zM36,26h2v1h-2zM37,44h2v1h-2zM44,17h3v2h-3zM10,23h2v2h-2zM43,44h2v1h-2zM27,7h2v1h-2zM17,40h3v2h-3zM12,23h2v3h-2zM35,3h2v1h-2zM43,4h1v2h-1zM4,23h2v2h-2zM25,45h3v2h-3zM14,20h3v2h-3zM32,42h1v2h-1zM40,40h3v2h-3zM19,17h2v2h-2zM38,6h1v2h-1zM47,8h2v3h-2zM43,13h2v1h-2zM6,9h2v1h-2zM48,37h2v2h-2zM26,45h2v1h-2zM4,43h3v2h-3zM13,39h2v3h-2zM34,29h1v2h-1zM51,6h2v3h-2zM45,21h1v2h-1zM27,12h3v2h-3zM6,21h2v2h-2zM4,5h2v1h-2zM24,0h1v2h-1zM16,22h2v3h-2zM44,13h1v2h-1zM23,39h3v2h-3zM23,26h1v2h-1zM37,28h1v2h-1zM23,1h2v3h-2zM41,44h2v3h-2zM42,5h2v3h-2zM25,7h3v2h-3zM40,19h1v2h-1zM50,30h3v2h-3zM10,33h3v2h-3zM25,14h2v2h-2zM37,6h2v2h-2zM15,23h2v3h-2zM13,16h2v3h-2zM5,25h2v1h-2zM52,9h1v2h-1zM44,7h3v2h-3zM13,6h3v2h-3zM6,35h2v1h-2zM44,31h2v1h-2zM48,39h2v2h-2zM32,9h2v2h-2zM23,44h1v2h-1zM6,45h1v2h-1zM11,34h1v2h-1zM16,31h2v2h-2zM34,42h2v3h-2zM19,3h3v2h-3zM28,43h1v2h-1zM46,13h2v3h-2zM12,23h1v2h-1zM8,19h1v2h-1zM38,31h2v3h-2zM2,6h2v2h-2zM25,14h3v2h-3zM37,23h2v3h-2zM12,9h2v1h-2zM28,30h2v1h-2zM11,15h2v3h-2zM38,33h2v3h-2zM36,1h2v1h-2zM14,4h1v2h-1zM35,8h1v2h-1zM26,42h2v1h-2zM50,13h3v2h-3zM10,31h2v1h-2z" fill="#c07050"/></pattern><pattern id="spD" x="0" y="0" width="41" height="37" patternUnits="userSpaceOnUse"><path d="M29,23h2v2h-2zM17,9h1v1h-1zM5,5h2v1h-2zM4,19h2v1h-2zM29,2h2v1h-2zM34,3h2v2h-2zM2,11h3v1h-3zM31,4h3v1h-3zM11,21h1v1h-1zM16,21h3v1h-3zM10,21h2v2h-2zM31,36h3v1h-3zM34,28h1v1h-1zM2,16h2v1h-2zM27,22h1v1h-1zM20,32h2v2h-2zM13,28h2v2h-2zM15,17h2v2h-2zM7,30h2v2h-2zM39,25h1v1h-1zM22,2h1v1h-1zM31,14h2v1h-2zM29,17h2v1h-2zM29,3h2v2h-2zM17,13h3v1h-3zM33,15h2v2h-2zM0,33h1v1h-1zM11,3h2v1h-2zM2,3h3v1h-3zM27,6h3v1h-3zM16,3h1v1h-1zM17,29h3v1h-3zM15,26h1v1h-1zM36,8h2v1h-2zM36,30h3v1h-3zM39,6h2v1h-2zM25,12h2v2h-2zM5,17h3v1h-3zM27,20h2v1h-2zM32,25h1v1h-1zM13,19h2v1h-2zM34,21h3v1h-3zM19,12h3v1h-3zM16,16h3v1h-3zM1,8h2v2h-2zM18,26h2v1h-2zM33,35h3v1h-3zM18,22h3v1h-3zM4,0h2v2h-2zM40,15h2v1h-2zM1,7h1v1h-1zM13,30h2v2h-2zM14,30h2v2h-2zM14,31h1v1h-1zM4,6h3v1h-3zM39,11h2v2h-2zM15,23h1v1h-1zM18,19h2v2h-2zM37,11h2v2h-2zM32,35h2v1h-2zM34,27h2v2h-2zM18,33h2v2h-2zM34,7h1v1h-1zM37,34h1v1h-1zM13,28h2v2h-2zM0,14h2v1h-2zM15,19h2v2h-2zM35,33h1v1h-1zM16,12h2v1h-2zM3,22h1v1h-1zM40,7h1v1h-1zM9,11h2v1h-2zM12,31h1v1h-1zM34,2h2v1h-2zM3,22h1v1h-1zM17,10h1v1h-1zM15,24h2v1h-2zM2,8h2v2h-2zM11,12h3v1h-3zM27,12h1v1h-1zM0,30h2v2h-2z" fill="#2a2420"/><path d="M22,3h1v1h-1zM20,11h1v1h-1zM33,33h3v1h-3zM21,36h1v1h-1zM30,29h2v2h-2zM30,1h3v1h-3zM1,1h2v1h-2zM19,2h2v2h-2zM39,35h2v2h-2zM16,20h2v1h-2zM9,26h3v1h-3zM39,10h3v1h-3zM10,20h2v1h-2zM40,0h2v2h-2zM35,7h3v1h-3zM0,31h3v1h-3zM5,20h3v1h-3zM3,9h1v1h-1zM17,3h2v1h-2zM31,30h2v1h-2zM2,1h2v2h-2zM7,16h2v2h-2zM19,16h2v1h-2zM39,8h1v1h-1zM26,25h1v1h-1zM31,31h2v1h-2zM9,33h3v1h-3zM17,6h2v2h-2zM3,1h2v2h-2zM2,6h1v1h-1zM37,23h2v1h-2zM20,25h1v1h-1zM3,22h2v2h-2zM13,26h2v1h-2zM5,7h3v1h-3zM30,26h2v2h-2zM35,17h2v2h-2zM27,31h2v1h-2zM24,4h3v1h-3zM31,20h1v1h-1zM19,1h2v1h-2zM23,27h2v1h-2zM26,19h1v1h-1zM30,35h3v1h-3zM18,14h3v1h-3zM26,22h3v1h-3zM5,24h2v1h-2zM31,3h2v1h-2zM4,21h2v2h-2zM17,36h2v2h-2zM20,10h3v1h-3zM38,3h3v1h-3zM23,13h3v1h-3zM9,22h1v1h-1zM25,25h2v1h-2zM12,16h1v1h-1zM3,1h2v2h-2zM13,23h2v2h-2zM28,36h2v2h-2zM14,35h2v1h-2zM9,21h3v1h-3zM11,11h2v1h-2zM22,22h2v1h-2zM34,1h1v1h-1zM2,22h3v1h-3zM9,20h1v1h-1zM18,14h1v1h-1zM1,23h2v2h-2zM7,10h1v1h-1zM32,12h2v2h-2zM32,15h3v1h-3zM23,32h2v2h-2zM28,33h2v1h-2zM1,18h2v2h-2zM2,2h3v1h-3zM33,12h2v2h-2zM23,29h1v1h-1zM4,7h2v1h-2zM24,7h3v1h-3zM4,29h2v1h-2zM12,1h2v1h-2zM20,16h2v1h-2zM36,19h3v1h-3zM24,11h3v1h-3zM2,15h2v2h-2zM12,5h1v1h-1zM11,15h3v1h-3zM7,24h2v2h-2zM0,3h3v1h-3zM37,24h1v1h-1zM3,7h1v1h-1zM38,23h2v2h-2zM31,36h2v1h-2zM24,29h2v1h-2zM39,24h2v1h-2zM37,7h2v1h-2zM4,10h3v1h-3zM9,24h1v1h-1zM39,1h2v1h-2z" fill="#4a3a30"/></pattern></defs>
<g filter="url(#soft)">
<rect x="451" y="103" width="446" height="564" fill="#c3b7a9"/>
<g clip-path="url(#gclip)">
<rect x="453.5" y="125" width="412.5" height="510.5" fill="#8ca862"/>
<g filter="url(#erode)"><path d="M455.2,127.0 L465.6,125.9 L472.8,131.1 L481.1,127.0 L485.3,135.3 L483.2,144.6 L486.3,148.7 L479.0,150.8 L470.7,147.7 L462.4,149.8 L455.2,150.8Z M494.6,129.0 L503.9,128.0 L512.2,131.1 L518.4,136.3 L516.4,144.6 L514.3,160.1 L506.0,160.1 L503.9,151.8 L499.8,146.7 L494.6,139.4Z M521.5,129.0 L533.0,129.0 L531.9,134.2 L523.6,134.2Z M522.6,158.1 L528.8,156.0 L537.1,160.1 L547.5,158.1 L557.8,156.0 L566.1,162.2 L574.4,176.7 L575.5,187.1 L570.3,191.2 L559.9,183.0 L553.7,178.8 L547.5,174.7 L537.1,176.7 L528.8,170.5 L521.5,166.4Z M549.5,145.6 L557.8,147.7 L555.8,151.8 L551.6,151.8Z M572.4,147.7 L582.7,149.8 L584.8,160.1 L578.6,162.2 L572.4,156.0Z M562.0,128.0 L582.7,127.0 L586.9,136.3 L578.6,139.4 L566.1,141.5 L559.9,137.3Z M595.2,129.0 L613.8,131.1 L611.8,143.6 L603.5,145.6 L595.2,137.3Z M609.7,143.6 L628.3,147.7 L636.6,153.9 L644.9,160.1 L640.8,174.7 L632.5,178.8 L626.3,168.4 L615.9,162.2 L607.6,153.9Z M603.5,172.6 L615.9,178.8 L628.3,187.1 L626.3,193.3 L615.9,191.2 L609.7,183.0Z M518.4,187.1 L528.8,186.1 L533.0,197.5 L524.7,199.5 L516.4,195.4Z M533.0,187.1 L545.4,191.2 L557.8,193.3 L570.3,197.5 L576.5,205.8 L574.4,212.0 L564.1,209.9 L555.8,205.8 L547.5,199.5 L537.1,195.4Z M536.1,215.1 L545.4,216.1 L557.8,222.4 L562.0,228.6 L557.8,234.8 L547.5,236.9 L539.2,238.9 L536.1,228.6Z M547.5,236.9 L557.8,241.0 L562.0,249.3 L557.8,253.5 L549.5,249.3Z M560.9,245.2 L572.4,246.2 L574.4,255.5 L566.1,257.6 L562.0,253.5Z M576.5,205.8 L591.0,197.5 L603.5,199.5 L611.8,207.8 L609.7,224.4 L599.3,228.6 L593.1,220.3 L582.7,216.1 L576.5,212.0Z M591.0,228.6 L603.5,232.7 L607.6,241.0 L599.3,245.2 L593.1,241.0Z M613.8,245.2 L628.3,243.1 L632.5,253.5 L624.2,257.6 L615.9,255.5Z M640.8,216.1 L653.2,212.0 L661.5,220.3 L659.5,232.7 L649.1,234.8 L642.9,228.6Z M649.1,135.3 L661.5,129.0 L675.0,129.0 L675.0,168.4 L665.7,166.4 L657.4,158.1 L653.2,147.7Z M659.5,178.8 L675.0,178.8 L675.0,207.8 L661.5,203.7Z M640.8,236.9 L657.4,234.8 L675.0,241.0 L675.0,265.9 L665.7,261.8 L653.2,257.6 L642.9,249.3Z M455.2,263.8 L460.4,261.8 L462.4,276.3 L458.3,286.6 L455.2,288.7Z M501.8,265.9 L512.2,264.9 L520.5,274.2 L520.5,286.6 L503.9,288.7Z M462.4,278.3 L481.1,282.5 L479.0,290.0 L462.4,290.0Z M595.2,282.5 L607.6,278.3 L620.1,280.4 L622.1,290.0 L595.2,290.0Z M474.9,235.8 L487.3,234.8 L488.4,243.1 L477.0,243.1Z M628.3,261.8 L638.7,259.7 L644.9,270.1 L636.6,274.2Z M675.0,124.9 L687.4,127.0 L699.9,131.1 L712.3,127.0 L724.8,131.1 L720.6,141.5 L704.0,147.7 L691.6,151.8 L683.3,153.9 L675.0,162.2Z M675.0,160.1 L681.2,162.2 L683.3,170.5 L677.1,172.6 L675.0,170.5Z M776.6,135.3 L787.0,131.1 L799.4,127.0 L824.3,127.0 L840.9,131.1 L849.2,141.5 L851.3,158.1 L855.4,170.5 L851.3,174.7 L840.9,166.4 L824.3,168.4 L811.9,176.7 L805.7,172.6 L803.6,153.9 L795.3,153.9 L791.1,145.6 L778.7,141.5Z M793.2,178.8 L803.6,176.7 L811.9,174.7 L824.3,178.8 L828.5,189.2 L820.2,191.2 L807.7,193.3 L797.4,191.2 L793.2,185.0Z M787.0,199.5 L799.4,197.5 L809.8,212.0 L816.0,222.4 L820.2,226.5 L807.7,226.5 L799.4,218.2 L791.1,212.0 L787.0,205.8Z M679.1,201.6 L693.7,199.5 L706.1,201.6 L720.6,203.7 L722.7,216.1 L716.5,224.4 L706.1,226.5 L691.6,224.4 L683.3,220.3 L677.1,212.0Z M749.7,203.7 L758.0,207.8 L758.0,213.0 L751.7,212.0Z M722.7,228.6 L735.1,226.5 L745.5,234.8 L747.6,245.2 L735.1,251.4 L722.7,253.5 L716.5,245.2 L718.6,236.9Z M776.6,232.7 L787.0,228.6 L799.4,232.7 L803.6,243.1 L797.4,249.3 L787.0,249.3 L778.7,243.1Z M683.3,245.2 L695.7,249.3 L710.3,251.4 L714.4,263.8 L710.3,272.1 L695.7,270.1 L683.3,265.9 L679.1,255.5Z M726.8,253.5 L743.4,251.4 L751.7,257.6 L749.7,265.9 L741.4,270.1 L728.9,268.0 L724.8,261.8Z M803.6,257.6 L816.0,259.7 L820.2,265.9 L811.9,268.0 L805.7,265.9Z M849.2,187.1 L857.5,183.0 L863.7,183.0 L863.7,203.7 L855.4,207.8 L849.2,199.5Z M851.3,212.0 L861.6,214.1 L863.7,224.4 L855.4,224.4Z M764.2,280.4 L772.5,282.5 L770.4,290.0 L764.2,290.0Z M807.7,280.4 L820.2,278.3 L824.3,290.0 L807.7,290.0Z M853.3,270.1 L863.7,265.9 L863.7,290.0 L853.3,290.0Z M675.0,249.3 L683.3,245.2 L681.2,278.3 L675.0,282.5Z M782.8,257.6 L793.2,259.7 L791.1,268.0 L782.8,265.9Z M675.0,285.0 L695.7,285.0 L687.4,297.4 L675.0,301.6Z M675.0,312.0 L687.4,316.1 L683.3,326.5 L675.0,328.6Z M710.3,301.6 L728.9,301.6 L726.8,314.0 L735.1,322.3 L731.0,338.9 L722.7,334.8 L716.5,324.4 L712.3,312.0Z M741.4,297.4 L758.0,297.4 L764.2,307.8 L778.7,305.7 L791.1,312.0 L799.4,307.8 L807.7,314.0 L813.9,322.3 L803.6,326.5 L791.1,324.4 L772.5,324.4 L758.0,322.3 L745.5,316.1 L739.3,307.8Z M799.4,285.0 L824.3,285.0 L828.5,297.4 L826.4,303.7 L816.0,303.7 L803.6,301.6 L799.4,293.3Z M675.0,343.1 L683.3,347.2 L687.4,357.6 L683.3,368.0 L675.0,370.0Z M691.6,330.6 L708.2,332.7 L712.3,341.0 L699.9,343.1 L691.6,338.9Z M724.8,353.4 L735.1,359.7 L733.1,368.0 L722.7,365.9Z M758.0,372.1 L772.5,368.0 L782.8,372.1 L795.3,378.3 L791.1,386.6 L780.8,390.8 L772.5,384.5 L762.1,382.5Z M722.7,378.3 L737.2,372.1 L749.7,378.3 L753.8,394.9 L741.4,401.1 L731.0,397.0 L724.8,390.8Z M691.6,388.7 L708.2,390.8 L714.4,401.1 L702.0,403.2 L691.6,401.1Z M787.0,392.8 L799.4,392.8 L807.7,388.7 L813.9,401.1 L811.9,413.6 L803.6,417.7 L791.1,413.6 L784.9,403.2Z M724.8,405.3 L737.2,405.3 L747.6,413.6 L743.4,426.0 L731.0,428.1 L722.7,419.8Z M747.6,415.7 L762.1,413.6 L772.5,421.9 L782.8,430.2 L791.1,430.2 L799.4,426.0 L811.9,423.9 L820.2,430.2 L828.5,430.2 L836.8,421.9 L849.2,421.9 L861.6,430.2 L864.8,434.3 L864.8,475.0 L851.3,475.0 L840.9,467.5 L824.3,461.3 L807.7,457.1 L791.1,450.9 L774.5,446.8 L758.0,440.5 L747.6,430.2Z M824.3,384.5 L836.8,384.5 L832.6,397.0 L820.2,405.3 L818.1,397.0Z M840.9,397.0 L857.5,397.0 L863.7,405.3 L861.6,417.7 L849.2,417.7 L840.9,409.4Z M840.9,301.6 L853.3,303.7 L861.6,312.0 L853.3,316.1 L840.9,312.0Z M843.0,363.8 L853.3,363.8 L853.3,372.1 L843.0,372.1Z M675.0,376.2 L681.2,382.5 L681.2,397.0 L675.0,401.1Z M675.0,442.6 L695.7,430.2 L716.5,426.0 L737.2,430.2 L758.0,440.5 L778.7,448.8 L799.4,454.0 L820.2,461.3 L847.1,470.6 L857.5,475.0 L675.0,475.0Z M675.0,401.1 L681.2,409.4 L683.3,421.9 L675.0,430.2Z M454.4,489.7 L465.3,494.0 L469.7,504.9 L465.3,513.7 L454.4,513.7Z M474.0,531.2 L491.5,520.2 L500.2,509.3 L513.3,513.7 L511.2,526.8 L502.4,542.1 L493.7,546.5 L484.9,553.0 L476.2,553.0 L474.0,542.1Z M511.2,470.0 L675.0,470.0 L675.0,498.4 L659.7,502.8 L646.6,509.3 L635.7,504.9 L616.0,502.8 L602.9,507.1 L585.4,502.8 L572.3,504.9 L563.6,509.3 L552.7,515.9 L543.9,509.3 L537.4,496.2 L524.3,489.7 L511.2,483.1Z M589.8,504.9 L620.4,504.9 L629.1,518.1 L624.7,529.0 L607.3,529.0 L594.2,522.4 L589.8,513.7Z M633.5,507.1 L655.3,504.9 L666.3,518.1 L668.4,535.5 L659.7,544.3 L646.6,539.9 L640.0,526.8 L631.3,518.1Z M653.1,542.1 L668.4,544.3 L675.0,553.0 L668.4,557.4 L655.3,553.0Z M554.8,529.0 L572.3,531.2 L576.7,542.1 L568.0,548.6 L557.0,546.5 L552.7,537.7Z M530.8,553.0 L546.1,546.5 L559.2,550.8 L572.3,557.4 L576.7,570.5 L568.0,574.8 L559.2,572.7 L550.5,579.2 L541.7,583.6 L533.0,574.8Z M554.8,570.5 L563.6,574.8 L563.6,588.0 L552.7,592.3 L546.1,583.6Z M519.9,601.1 L535.2,596.7 L546.1,605.4 L559.2,601.1 L570.1,605.4 L572.3,618.5 L561.4,622.9 L550.5,620.7 L537.4,627.3 L524.3,622.9Z M522.1,574.8 L533.0,574.8 L533.0,588.0 L522.1,588.0Z M594.2,570.5 L611.6,568.3 L622.6,574.8 L637.9,572.7 L642.2,585.8 L635.7,592.3 L622.6,588.0 L607.3,588.0 L598.5,594.5 L594.2,583.6Z M624.7,553.0 L640.0,553.0 L644.4,563.9 L633.5,568.3 L624.7,563.9Z M572.3,618.5 L589.8,614.2 L607.3,616.4 L624.7,618.5 L629.1,631.6 L620.4,636.0 L602.9,636.0 L581.1,636.0 L570.1,631.6Z M454.4,598.9 L463.1,596.7 L460.9,612.0 L454.4,612.0Z M454.4,614.2 L465.3,618.5 L465.3,636.0 L454.4,636.0Z M666.3,579.2 L675.0,579.2 L675.0,592.3 L666.3,590.1Z M642.2,620.7 L657.5,618.5 L675.0,622.9 L675.0,636.0 L644.4,636.0Z M476.2,629.5 L493.7,629.5 L493.7,636.0 L476.2,636.0Z M572.3,500.6 L585.4,504.9 L581.1,513.7 L572.3,513.7Z M541.7,509.3 L552.7,515.9 L546.1,531.2 L541.7,542.1 L537.4,557.4 L530.8,553.0 L535.2,535.5 L537.4,520.2Z M675.0,470.0 L773.3,470.0 L771.1,483.1 L766.7,498.4 L747.1,498.4 L736.2,502.8 L723.1,496.2 L705.6,496.2 L692.5,489.7 L675.0,487.5Z M806.1,474.4 L827.9,480.9 L849.7,489.7 L865.0,498.4 L865.0,542.1 L849.7,539.9 L836.6,531.2 L827.9,522.4 L817.0,513.7 L810.4,500.6 L801.7,487.5Z M675.0,507.1 L688.1,509.3 L705.6,511.5 L709.9,522.4 L696.8,529.0 L683.7,526.8 L675.0,524.6Z M738.3,513.7 L753.6,515.9 L766.7,520.2 L779.8,518.1 L793.0,522.4 L797.3,533.3 L788.6,539.9 L775.5,539.9 L762.4,533.3 L749.3,531.2 L738.3,526.8Z M832.3,544.3 L849.7,544.3 L865.0,550.8 L865.0,572.7 L854.1,574.8 L841.0,566.1 L832.3,557.4Z M762.4,557.4 L775.5,561.7 L793.0,557.4 L806.1,553.0 L814.8,561.7 L819.2,572.7 L810.4,577.0 L797.3,579.2 L786.4,574.8 L777.7,579.2 L766.7,572.7Z M675.0,568.3 L683.7,574.8 L688.1,588.0 L679.4,592.3 L675.0,592.3Z M696.8,592.3 L709.9,588.0 L723.1,585.8 L731.8,594.5 L740.5,601.1 L749.3,609.8 L740.5,618.5 L731.8,620.7 L718.7,622.9 L707.8,618.5 L699.0,607.6Z M753.6,581.4 L766.7,577.0 L779.8,583.6 L788.6,588.0 L788.6,601.1 L784.2,612.0 L771.1,614.2 L762.4,609.8 L753.6,601.1Z M740.5,618.5 L758.0,614.2 L775.5,616.4 L793.0,616.4 L806.1,620.7 L819.2,614.2 L832.3,605.4 L841.0,596.7 L854.1,598.9 L865.0,605.4 L865.0,636.0 L827.9,636.0 L784.2,636.0 L758.0,636.0 L742.7,631.6Z M827.9,583.6 L841.0,579.2 L849.7,583.6 L854.1,592.3 L845.4,596.7 L832.3,596.7Z M854.1,574.8 L865.0,574.8 L865.0,583.6 L858.5,585.8Z" fill="#d5c9bc"/></g>
<rect x="453.5" y="125" width="412.5" height="510.5" fill="url(#fragL)" opacity="0.9"/>
<rect x="453.5" y="125" width="412.5" height="510.5" fill="url(#fragG)" clip-path="url(#lclip)" opacity="0.9"/>
<g clip-path="url(#t3clip)">
<rect x="453.5" y="285" width="221.5" height="190" fill="#d0c4b7"/>
<path d="M477.0,285.0 L557.8,285.0 L562.0,295.4 L557.8,305.7 L566.1,318.2 L562.0,326.5 L547.5,324.4 L537.1,328.6 L528.8,320.3 L512.2,326.5 L503.9,312.0 L495.6,309.9 L474.9,312.0 L468.7,305.7 L479.0,297.4Z M454.1,285.0 L477.0,285.0 L479.0,297.4 L468.7,305.7 L458.3,297.4 L454.1,293.3Z M497.7,330.6 L512.2,326.5 L528.8,334.8 L539.2,332.7 L549.5,334.8 L562.0,332.7 L570.3,334.8 L582.7,336.8 L586.9,347.2 L578.6,355.5 L566.1,357.6 L557.8,353.4 L547.5,357.6 L537.1,353.4 L528.8,359.7 L516.4,355.5 L508.1,351.4 L501.8,347.2 L497.7,338.9Z M578.6,285.0 L675.0,285.0 L675.0,376.2 L665.7,382.5 L657.4,392.8 L649.1,401.1 L636.6,405.3 L624.2,399.1 L611.8,392.8 L599.3,382.5 L593.1,368.0 L595.2,355.5 L599.3,347.2 L603.5,332.7 L607.6,316.1 L595.2,297.4 L582.7,291.2Z M454.1,322.3 L462.4,326.5 L472.8,332.7 L466.6,345.1 L462.4,355.5 L456.2,363.8 L454.1,363.8Z M454.1,409.4 L470.7,405.3 L491.5,401.1 L497.7,409.4 L491.5,421.9 L474.9,421.9 L462.4,417.7 L454.1,417.7Z M454.1,426.0 L491.5,426.0 L508.1,430.2 L516.4,442.6 L516.4,463.3 L512.2,475.0 L483.2,475.0 L470.7,467.5 L458.3,463.3 L454.1,455.1Z M599.3,401.1 L615.9,401.1 L632.5,409.4 L640.8,421.9 L632.5,434.3 L620.1,438.5 L607.6,430.2 L599.3,417.7Z M647.0,409.4 L675.0,405.3 L675.0,442.6 L657.4,442.6 L649.1,430.2Z M454.1,368.0 L470.7,365.9 L483.2,372.1 L474.9,380.4 L462.4,382.5 L454.1,380.4Z" fill="#8ca862"/>
<path d="M636.6,289.1 L657.4,291.2 L655.3,305.7 L640.8,305.7Z M653.2,322.3 L675.0,320.3 L675.0,336.8 L657.4,336.8Z M620.1,357.6 L632.5,357.6 L632.5,368.0 L620.1,368.0Z M642.9,345.1 L657.4,347.2 L657.4,363.8 L644.9,363.8Z M611.8,376.2 L624.2,376.2 L624.2,388.7 L613.8,388.7Z M640.8,376.2 L657.4,376.2 L657.4,392.8 L642.9,392.8Z M586.9,293.3 L599.3,297.4 L603.5,314.0 L595.2,320.3 L586.9,309.9Z M454.1,446.8 L470.7,448.8 L472.8,467.5 L456.2,467.5Z M497.7,442.6 L508.1,442.6 L508.1,455.1 L497.7,455.1Z M458.3,297.4 L479.0,297.4 L479.0,307.8 L462.4,307.8Z" fill="#d5c9bc"/>
<rect x="453.5" y="285" width="221.5" height="190" fill="url(#spL)" opacity="0.5"/>
</g>
<rect x="453.5" y="125" width="412.5" height="510.5" fill="url(#spG)" opacity="0.6"/>
<rect x="453.5" y="125" width="412.5" height="510.5" fill="url(#spL)" clip-path="url(#lclip)" opacity="0.6"/>
<path d="M510.0,425.0 L530.0,420.0 L545.0,425.0 L556.0,436.0 L566.0,448.0 L580.0,458.0 L600.0,468.0 L625.0,472.0 L645.0,470.0 L655.0,485.0 L648.0,503.0 L620.0,505.0 L595.0,506.0 L572.0,503.0 L550.0,500.0 L530.0,490.0 L518.0,470.0 L508.0,445.0Z" fill="#b08670" filter="url(#tblur)"/>
<rect x="500" y="420" width="160" height="90" fill="url(#spT)" clip-path="url(#tclip)" opacity="0.8"/>
<path d="M553.0,382.0 L575.0,381.0 L590.0,398.0 L598.0,418.0 L602.0,440.0 L590.0,447.0 L575.0,437.0 L562.0,422.0 L550.0,405.0Z M786.0,432.0 L800.0,428.0 L815.0,438.0 L818.0,452.0 L806.0,460.0 L790.0,456.0Z" fill="#b8a696"/>
<rect x="540" y="370" width="290" height="100" fill="url(#spD)" clip-path="url(#dclip)" opacity="0.75"/>
<path d="M453.0,389.3 L453.9,389.3 L469.3,383.5 L498.3,382.6 L523.4,385.5 L536.9,393.2 L550.4,406.7 L562.0,420.2 L573.6,433.7 L589.1,443.4 L604.5,451.1 L623.8,455.0 L643.2,453.0 L662.5,450.5 L681.8,441.5 L701.1,431.8 L720.0,426.7 L733.4,429.4 L746.8,436.1 L764.2,442.8 L780.2,452.2 L800.3,456.2 L820.4,458.8 L833.7,461.5 L847.1,470.9 L866.0,477.6 L866.0,499.0 L853.8,490.9 L833.7,480.2 L813.7,476.2 L793.6,470.9 L773.5,469.5 L753.5,462.9 L742.8,460.2 L733.4,447.5 L720.0,445.0 L706.7,448.5 L691.5,455.0 L672.1,461.5 L652.8,466.0 L633.5,471.0 L614.2,470.0 L594.9,462.7 L575.6,453.1 L562.0,439.5 L550.4,426.0 L538.9,412.5 L527.3,402.8 L508.0,399.0 L488.6,399.0 L469.3,402.8 L453.0,408.6Z M691.4,359.3 L699.3,362.5 L712.4,363.8 L721.5,365.8 L724.1,372.4 L723.5,381.5 L718.9,386.8 L705.8,388.7 L692.7,388.7 L686.2,390.7 L681.6,386.8 L682.3,380.2 L690.1,378.9 L699.3,378.2 L709.7,377.6 L715.0,375.0 L712.4,371.7 L703.2,371.0 L695.3,371.0 L692.1,365.8Z M681.6,386.8 L686.2,390.7 L688.1,397.2 L691.4,402.5 L700.6,405.1 L712.4,404.4 L718.9,409.0 L720.9,416.9 L717.6,424.7 L712.4,430.0 L699.3,426.0 L686.2,423.0 L679.6,421.0 L679.0,418.2 L692.7,416.9 L703.2,415.5 L707.1,411.6 L699.3,410.3 L690.1,409.0 L682.9,402.5 L680.9,394.6Z" fill="#6f97a3" stroke="#6f97a3" stroke-width="1.6" stroke-linejoin="round"/>
<path d="M453.0,389.3 L453.9,389.3 L469.3,383.5 L498.3,382.6 L523.4,385.5 L536.9,393.2 L550.4,406.7 L562.0,420.2 L573.6,433.7 L589.1,443.4 L604.5,451.1 L623.8,455.0 L643.2,453.0 L662.5,450.5 L681.8,441.5 L701.1,431.8 L720.0,426.7 L733.4,429.4 L746.8,436.1 L764.2,442.8 L780.2,452.2 L800.3,456.2 L820.4,458.8 L833.7,461.5 L847.1,470.9 L866.0,477.6 L866.0,499.0 L853.8,490.9 L833.7,480.2 L813.7,476.2 L793.6,470.9 L773.5,469.5 L753.5,462.9 L742.8,460.2 L733.4,447.5 L720.0,445.0 L706.7,448.5 L691.5,455.0 L672.1,461.5 L652.8,466.0 L633.5,471.0 L614.2,470.0 L594.9,462.7 L575.6,453.1 L562.0,439.5 L550.4,426.0 L538.9,412.5 L527.3,402.8 L508.0,399.0 L488.6,399.0 L469.3,402.8 L453.0,408.6Z M691.4,359.3 L699.3,362.5 L712.4,363.8 L721.5,365.8 L724.1,372.4 L723.5,381.5 L718.9,386.8 L705.8,388.7 L692.7,388.7 L686.2,390.7 L681.6,386.8 L682.3,380.2 L690.1,378.9 L699.3,378.2 L709.7,377.6 L715.0,375.0 L712.4,371.7 L703.2,371.0 L695.3,371.0 L692.1,365.8Z M681.6,386.8 L686.2,390.7 L688.1,397.2 L691.4,402.5 L700.6,405.1 L712.4,404.4 L718.9,409.0 L720.9,416.9 L717.6,424.7 L712.4,430.0 L699.3,426.0 L686.2,423.0 L679.6,421.0 L679.0,418.2 L692.7,416.9 L703.2,415.5 L707.1,411.6 L699.3,410.3 L690.1,409.0 L682.9,402.5 L680.9,394.6Z" fill="url(#spW)" opacity="0.6"/>
<path d="M678.3,330.5 C682,340 688,347 692,360" fill="none" stroke="#6f97a3" stroke-width="3"/>
<path d="M674.7,120.0 Q674.7,120.0 674.7,124.0 Q674.7,127.9 676.0,134.4 Q677.4,140.9 681.3,144.9 Q685.2,148.8 683.9,156.7 Q682.6,164.5 687.9,167.1 Q693.1,169.7 697.0,172.3 Q700.9,175.0 699.6,178.9 Q698.3,182.8 693.0,182.8 Q687.8,182.8 682.6,178.9 Q677.4,175.0 674.8,177.6 Q672.1,180.2 672.1,186.8 Q672.1,193.3 677.4,197.2 Q682.6,201.2 678.7,206.4 Q674.7,211.6 668.2,215.6 Q661.6,219.5 660.3,223.4 Q659.0,227.4 663.0,228.7 Q666.9,230.0 672.1,232.6 Q677.4,235.2 674.8,239.1 Q672.1,243.1 670.8,247.0 Q669.5,250.9 674.8,256.1 Q680.0,261.4 678.7,269.2 Q677.4,277.1 670.8,275.8 Q664.3,274.5 657.8,273.2 Q651.2,271.9 648.5,277.1 Q645.9,282.3 651.1,286.2 Q656.4,290.2 663.0,295.4 Q669.5,300.7 673.5,307.2 Q677.4,313.8 682.6,308.6 Q687.8,303.3 693.0,300.7 Q698.3,298.1 702.2,303.3 Q706.2,308.5 703.5,315.1 Q700.9,321.6 693.0,326.9 Q685.2,332.1 681.8,331.3 L678.3,330.5 M672.1,243.1 Q672.1,243.1 666.9,241.8 Q661.6,240.5 657.7,237.8 Q653.8,235.2 648.5,233.9 Q643.3,232.6 638.0,231.3 Q632.8,230.0 627.6,230.0 Q622.4,230.0 621.1,224.8 Q619.8,219.5 621.1,211.7 Q622.4,203.8 618.5,199.9 Q614.5,195.9 608.0,193.3 Q601.4,190.7 596.1,192.0 Q590.9,193.3 589.6,189.4 Q588.3,185.5 592.2,182.8 Q596.2,180.2 591.0,177.6 Q585.7,175.0 580.5,172.4 Q575.2,169.8 572.6,164.9 Q570.0,160.0 569.0,152.5 Q568.0,145.0 567.0,136.0 L566.0,127.0" fill="none" stroke="#5a8ca6" stroke-width="1" opacity="0.75"/>
<path d="M831.5,606.1 L832.6,597.1 L831.9,587.5 L834.4,579.2 M461.7,440.6 L465.5,428.0 L467.3,417.0 L472.2,408.8 M479.4,522.7 L467.9,511.9 L456.2,505.0 L454.0,501.3 L454.0,496.3 M490.8,366.9 L494.1,354.6 L490.4,341.1 L487.6,328.7 L485.4,317.1 L477.6,310.4 L467.2,299.1 L456.6,293.7 M500.3,581.7 L492.2,578.8 L478.9,582.7 L464.6,582.0 L454.0,586.2 L454.0,582.7 L454.0,576.2 M851.9,156.2 L847.9,163.4 L850.1,171.3 L849.4,177.9 M839.5,352.3 L841.7,361.8 L846.2,366.9 L851.8,372.6 M835.0,607.0 L836.6,619.4 L834.5,630.8 L836.1,635.0 M523.0,133.9 L531.1,126.0 L538.9,126.0 L552.2,126.0 L560.4,126.0 L569.3,126.0 L580.9,126.0 M679.3,544.6 L689.9,549.2 L694.8,556.1 L694.1,562.9 L691.9,574.1 M551.4,410.7 L544.2,405.8 L538.3,403.7 L531.9,391.9 L523.3,380.8 L510.9,378.8 L497.7,370.7 M626.5,267.7 L622.1,261.4 L617.5,254.0 L619.4,246.0 L612.8,232.6 L609.0,227.8 L602.2,220.2 L597.9,211.1 M782.7,265.9 L791.0,260.0 L801.7,258.8 L810.3,258.6 L816.7,256.0 M544.2,261.0 L549.4,249.9 L557.6,246.9 L563.7,247.4 L574.6,238.9 L578.5,225.9 L582.5,216.0 L584.2,209.4 M537.4,412.9 L526.6,410.1 L517.9,406.1 L513.6,394.6 M738.7,432.9 L743.5,439.1 L755.5,440.9 L767.6,435.4 M646.4,485.4 L639.4,475.6 L635.2,467.3 L629.2,463.9 M803.9,231.9 L795.7,232.3 L780.4,230.9 L769.8,227.0 L758.2,228.1 L748.1,225.1 M723.8,609.6 L713.1,601.0 L710.8,595.1 L704.1,583.7 L702.8,572.4 L697.2,564.0 M479.8,287.1 L470.1,290.2 L463.2,296.3 L454.0,300.8 L454.0,312.5 M689.7,615.6 L676.9,609.6 L666.5,610.4 L654.9,617.7 L644.6,615.6 L634.3,622.5 L626.9,633.6 L622.7,635.0 M838.9,466.5 L846.1,468.2 L853.4,479.6 L854.1,490.2 L849.2,504.7 L846.5,517.2 M853.5,530.5 L858.5,541.5 L861.5,548.9 L865.0,561.6 M565.0,271.3 L556.0,264.3 L543.7,259.1 L531.0,259.7 L520.3,255.1 L507.1,259.0 L497.2,270.6 L489.4,275.4 M557.7,609.5 L555.8,603.4 L550.5,589.0 L542.8,585.0 M677.1,340.6 L676.2,332.7 L679.5,319.8 L673.6,306.9 M527.5,237.5 L542.7,237.5 L552.5,239.1 L563.9,231.8 L568.9,227.7 M463.3,201.4 L471.4,209.6 L471.5,215.7 L471.7,226.2 L476.4,238.6 L483.3,242.0 L497.5,244.2 L504.3,240.8 M789.0,465.3 L792.6,472.4 L803.3,479.3 L811.6,488.0 L812.7,496.0 L822.0,504.5 L833.7,505.6 M784.0,550.0 L784.3,540.4 L779.6,530.5 L784.1,517.5 M496.2,252.9 L491.4,258.7 L485.5,264.8 L485.2,276.7 L475.2,286.2 L468.2,289.0 L456.3,292.4 M764.2,353.1 L772.2,353.9 L783.8,359.1 L797.8,360.6 L807.8,370.2 L819.1,371.6 M609.4,451.3 L621.0,461.4 L635.6,460.7 L647.5,465.7 L660.5,462.6 L672.5,465.0 L681.6,477.5 L687.8,491.5 M514.4,278.3 L502.8,275.3 L494.3,267.3 L488.0,258.1 L485.5,250.8 L477.0,240.6 L472.4,227.2 L476.5,213.9 M678.7,571.2 L666.7,567.2 L661.1,560.5 L649.5,557.4 M548.4,624.5 L534.9,628.7 L526.6,631.0 L519.3,627.6 L511.6,627.7 M674.3,623.5 L661.8,619.1 L650.4,618.1 L636.2,614.8 L627.6,619.4 L617.8,629.3 M503.3,159.1 L505.6,167.6 L511.4,172.7 L513.4,182.1 M575.7,565.4 L574.6,553.8 L571.7,542.1 L570.2,526.3 L560.9,517.9 L548.7,515.4 L539.7,520.9 L530.2,529.0 M507.2,134.7 L496.8,139.4 L489.7,150.5 L482.8,156.0 L475.0,157.5 L465.5,162.7 L459.5,162.0 M565.4,372.3 L557.3,366.0 L544.5,363.6 L534.5,351.4 L533.8,344.2 L536.2,335.9 L535.0,321.8 L531.8,316.6 M733.8,387.2 L727.6,392.2 L713.6,391.1 L708.5,386.8 L700.7,387.2 M471.8,417.2 L457.4,414.0 L454.0,405.1 L454.0,403.7 L454.0,399.2 L454.0,398.2 M861.6,604.0 L865.0,595.4 L865.0,584.5 L864.7,578.1 L865.0,572.2 L865.0,560.2 L865.0,556.0 M619.2,285.7 L604.3,282.2 L590.4,278.3 L583.9,269.4 M834.5,217.7 L821.0,223.0 L811.9,223.5 L802.6,215.6 L789.9,210.1 M547.0,249.3 L549.7,240.4 L554.4,231.9 L559.7,217.5 M691.5,580.7 L696.0,586.2 L707.4,588.7 L715.0,584.6 L720.4,580.3 M783.1,582.4 L792.6,584.9 L805.8,593.6 L818.4,602.5 L825.9,603.6 M512.6,401.0 L523.8,390.2 L531.4,390.1 L537.3,392.3 L548.5,390.7 L555.5,386.3 M601.3,359.6 L613.2,360.4 L621.5,360.8 L631.2,366.9 L635.5,379.8 L638.2,386.3 L646.6,397.4 L652.0,406.1 M490.9,243.3 L484.7,250.3 L478.7,251.8 L468.2,253.2 L457.4,247.7 M537.4,211.4 L545.0,217.5 L556.3,220.3 L567.2,217.5 M595.5,288.8 L591.5,282.7 L582.6,276.9 L574.2,266.3 L561.6,262.8 M825.0,247.3 L818.0,242.2 L803.5,240.1 L791.5,234.7 L783.4,228.9 L778.7,221.1 L779.1,211.2 M648.5,426.5 L652.9,421.3 L657.6,409.9 L653.7,400.4 L659.1,388.2 L662.7,373.6 L667.6,360.3 L668.6,350.6 M740.4,511.5 L738.4,496.1 L736.2,489.1 L736.3,479.0 L741.1,464.6 M612.1,335.0 L606.5,332.4 L598.2,331.7 L588.6,339.5 L580.3,344.4 M759.8,246.1 L757.2,259.9 L756.6,270.6 L761.9,276.4 M644.2,379.7 L658.2,384.7 L665.8,390.4 L671.3,402.8 L671.8,411.5 M732.1,458.5 L731.5,446.3 L740.5,433.9 L744.6,424.1 L751.5,409.8 L757.8,406.2 L765.1,395.6 L770.7,393.1 M581.5,132.7 L586.3,128.7 L590.1,126.0 L598.8,126.0 L609.1,126.0 L612.0,126.0 L618.0,126.0 L630.2,126.0 M594.0,422.7 L586.7,416.2 L580.3,411.3 L570.2,408.9 L561.6,409.8 L548.0,411.4 L543.9,415.8 L534.6,427.6 M712.6,311.9 L726.1,316.8 L733.5,313.8 L743.4,314.6 L748.4,319.0 M836.8,440.8 L827.5,445.9 L820.1,457.5 L820.1,466.5 M491.8,136.0 L489.1,145.1 L477.5,151.7 L474.4,163.2 M819.7,522.1 L822.7,530.0 L824.0,541.7 L829.6,551.7 M563.7,266.7 L555.5,279.7 L556.0,287.2 L555.0,296.2 M553.2,167.1 L557.8,180.5 L554.4,192.0 L547.4,201.4 L544.3,214.6 L546.6,228.5 L543.6,238.1 M811.0,250.0 L797.9,246.1 L788.7,245.9 L780.4,246.9 L774.9,253.7 L768.6,255.1" fill="none" stroke="#9a5a38" stroke-width="0.8" stroke-dasharray="1.6 1.4" opacity="0.7"/>
<path d="M658.6,244.9h5v1.5h-5zM801.7,429.8h8v1.5h-8zM513.7,576.0h4v1.5h-4zM828.5,540.4h8v2h-8zM604.6,443.6h8v2h-8zM691.2,319.4h6v2h-6zM595.9,327.9h4v2h-4zM811.8,307.8h6v2.5h-6zM852.2,492.1h5v2.5h-5zM758.1,356.1h6v2h-6zM566.8,604.1h10v2.5h-10zM677.4,476.6h8v1.5h-8zM524.0,271.3h5v1.5h-5zM583.2,627.4h10v2.5h-10zM657.2,448.7h8v2.5h-8zM751.4,398.0h6v2.5h-6zM657.4,148.4h4v1.5h-4zM568.5,356.3h5v1.5h-5zM636.6,349.7h10v2h-10zM718.2,473.5h4v1.5h-4zM551.3,186.8h6v1.5h-6zM639.7,557.3h4v2.5h-4zM781.7,206.5h6v2.5h-6zM563.2,603.1h8v2h-8zM712.9,170.1h10v1.5h-10zM802.0,186.0h6v1.5h-6zM764.9,210.4h6v2.5h-6zM828.9,425.3h6v1.5h-6zM601.1,209.5h6v2.5h-6zM509.4,450.2h4v2h-4zM553.6,535.2h4v2h-4zM644.9,584.4h8v2.5h-8zM606.5,463.0h6v2h-6zM801.4,311.4h5v1.5h-5zM662.3,399.8h5v2h-5zM490.3,140.4h5v1.5h-5zM518.8,441.0h5v2.5h-5zM801.9,421.1h6v1.5h-6zM500.0,496.8h5v2h-5zM580.8,472.0h6v1.5h-6zM456.5,309.8h10v1.5h-10zM785.7,201.8h8v1.5h-8zM826.9,217.4h5v2h-5zM772.0,442.4h8v1.5h-8zM640.3,159.4h8v2h-8zM519.3,497.9h8v2h-8zM555.1,584.0h6v2h-6zM491.1,521.9h4v1.5h-4zM457.8,327.1h5v2.5h-5zM696.7,209.1h10v2.5h-10zM646.8,618.5h6v2h-6zM782.5,437.1h6v1.5h-6zM469.0,482.5h10v1.5h-10zM484.7,554.6h5v2.5h-5zM575.1,403.2h8v2.5h-8zM763.8,202.7h5v1.5h-5zM502.7,480.2h4v1.5h-4zM469.4,229.2h10v2.5h-10zM468.7,607.1h4v2h-4zM754.3,533.7h8v1.5h-8zM776.3,549.9h6v2h-6zM542.2,202.9h6v2.5h-6zM566.6,401.7h8v1.5h-8zM593.6,235.7h10v2.5h-10zM654.7,573.9h8v2.5h-8zM672.7,530.4h5v2h-5zM788.0,442.7h6v2.5h-6zM515.7,387.6h6v1.5h-6zM787.2,487.3h8v2h-8zM762.5,332.6h8v1.5h-8zM837.1,141.3h4v2.5h-4zM793.6,561.9h4v1.5h-4zM700.7,172.0h10v2h-10zM801.4,361.9h10v1.5h-10zM736.2,259.7h4v1.5h-4zM854.4,402.0h10v1.5h-10zM486.5,179.8h5v1.5h-5zM844.1,539.2h6v2h-6zM462.3,421.3h8v2h-8zM479.8,261.9h8v2.5h-8zM556.8,409.8h4v1.5h-4zM767.3,180.7h10v2.5h-10zM658.2,562.7h10v2h-10zM768.9,547.0h10v2.5h-10zM703.6,366.7h6v1.5h-6zM565.5,238.2h8v2.5h-8zM778.0,517.2h4v1.5h-4zM506.6,227.0h5v2.5h-5zM508.3,201.4h10v2h-10zM735.3,362.1h10v2h-10zM732.2,543.7h10v2h-10zM734.1,303.0h8v1.5h-8zM842.3,565.6h5v1.5h-5zM588.6,584.3h4v2.5h-4zM641.5,354.8h8v2.5h-8zM712.7,594.0h10v2.5h-10zM764.2,421.9h6v2.5h-6zM612.9,352.9h10v2.5h-10zM622.6,354.9h10v2h-10zM641.9,353.6h8v2h-8zM572.5,368.3h8v1.5h-8zM711.3,202.6h5v2h-5zM812.5,166.2h8v2.5h-8zM697.6,551.8h5v1.5h-5zM694.4,458.6h6v2h-6zM719.0,608.5h5v2.5h-5zM705.4,376.8h4v2.5h-4zM778.5,343.8h4v1.5h-4zM463.8,240.0h6v2.5h-6zM802.5,563.9h8v1.5h-8zM626.8,369.2h10v1.5h-10zM543.4,315.2h8v2.5h-8zM463.5,416.3h4v1.5h-4zM680.9,157.9h5v2h-5zM640.2,511.0h5v1.5h-5zM631.0,389.0h10v2.5h-10zM845.6,555.5h4v2.5h-4zM648.2,545.1h8v2h-8zM775.9,155.3h6v2h-6zM475.7,255.1h8v2h-8zM700.2,252.6h4v1.5h-4zM826.1,425.2h5v2.5h-5zM619.0,581.5h10v1.5h-10zM687.5,444.3h6v2h-6zM699.4,216.5h4v2.5h-4zM745.9,141.4h6v1.5h-6zM574.1,624.5h4v2.5h-4zM516.3,536.7h5v2h-5zM547.7,262.5h6v2h-6zM611.4,610.7h8v1.5h-8zM720.9,436.9h6v2h-6zM626.7,363.5h5v2.5h-5zM753.0,386.7h4v1.5h-4zM632.3,358.2h6v1.5h-6zM725.1,387.4h10v2.5h-10zM812.0,359.9h4v2.5h-4zM712.9,222.0h6v2h-6zM685.5,309.6h10v2.5h-10zM656.3,215.0h4v1.5h-4zM560.9,556.4h4v2h-4zM788.1,436.4h4v2h-4zM507.6,337.8h4v1.5h-4zM655.4,301.7h5v2.5h-5zM733.8,582.0h4v2h-4zM622.4,459.0h5v1.5h-5zM690.0,346.9h6v2.5h-6zM487.8,440.0h5v1.5h-5zM618.1,243.7h8v2.5h-8zM607.8,286.3h10v2h-10zM689.4,295.7h8v2.5h-8zM762.3,154.2h8v1.5h-8zM794.9,596.1h6v2h-6zM521.5,167.5h4v1.5h-4zM663.7,304.1h6v1.5h-6zM608.0,612.2h8v1.5h-8zM722.5,360.0h5v2.5h-5zM745.1,237.6h10v2.5h-10zM557.1,212.1h4v2h-4zM691.7,282.7h6v2.5h-6zM844.4,197.7h5v2.5h-5z" fill="#2a2620" opacity="0.55"/>
<path d="M675.0,127.0 L657.4,139.4 L636.6,160.1 L632.5,170.5 L628.3,193.3 L624.2,212.0 L613.8,228.6 L609.7,245.2 L607.6,265.9 L603.5,290.0" fill="none" stroke="#8a4028" stroke-width="1.1" opacity="0.9"/>
<path d="M454.1,305.7 L474.9,320.3 L501.8,338.9 L528.8,365.9 L547.5,376.2 L566.1,384.5 L574.4,401.1 L588.9,430.2" fill="none" stroke="#8a4028" stroke-width="1.1" opacity="0.9"/>
<path d="M528.6,491.8 L502.4,522.4 L485.0,553.0 L471.8,570.5 L454.4,594.5" fill="none" stroke="#8a4028" stroke-width="1.1" opacity="0.9"/>
<path d="M640.0,500.6 L653.1,524.6 L668.4,546.5 L675.0,561.7" fill="none" stroke="#8a4028" stroke-width="1.1" opacity="0.9"/>
<path d="M675.0,500.6 L710.0,509.3 L784.2,520.2 L865.0,542.1" fill="none" stroke="#8a4028" stroke-width="1.1" opacity="0.9"/>
<path d="M675.0,563.9 L688.1,590.1 L699.0,612.0 L701.2,635.0" fill="none" stroke="#8a4028" stroke-width="1.1" opacity="0.9"/>
<path d="M751.5,500.6 L784.2,500.6 L865.0,513.7" fill="none" stroke="#8a4028" stroke-width="1.1" opacity="0.9"/>
<path d="M454.0,424.0 L480.0,428.0 L500.0,432.0 L520.0,432.0" fill="none" stroke="#8a4028" stroke-width="1.1" opacity="0.9"/>
<path d="M454.0,350.0 L470.0,335.0 L490.0,320.0" fill="none" stroke="#8a4028" stroke-width="1.1" opacity="0.9"/>
<path d="M543.9,509.3 L533.0,557.4 L515.5,590.1 L482.8,634.9" fill="none" stroke="#2a2a22" stroke-width="0.9" opacity="0.8"/>
<path d="M632.5,253.5 L599.3,282.5 L562.0,326.5" fill="none" stroke="#2a2a22" stroke-width="0.9" opacity="0.8"/>
<path d="M440.7,125L459.6,636 M468.3,125L487.2,636 M495.9,125L514.8,636 M523.5,125L542.4,636 M551.1,125L570.0,636 M578.7,125L597.6,636 M606.3,125L625.2,636 M633.9,125L652.8,636 M661.5,125L680.4,636 M689.1,125L708.0,636 M716.7,125L735.6,636 M744.3,125L763.2,636 M771.9,125L790.8,636 M799.5,125L818.4,636 M827.1,125L846.0,636 M854.7,125L873.6,636 M453,127.1L866,111.8 M453,154.6L866,139.3 M453,182.1L866,166.8 M453,209.6L866,194.3 M453,237.1L866,221.8 M453,264.6L866,249.3 M453,292.1L866,276.8 M453,319.6L866,304.3 M453,347.1L866,331.8 M453,374.6L866,359.3 M453,402.1L866,386.8 M453,429.6L866,414.3 M453,457.1L866,441.8 M453,484.6L866,469.3 M453,512.1L866,496.8 M453,539.6L866,524.3 M453,567.1L866,551.8 M453,594.6L866,579.3 M453,622.1L866,606.8 M453,649.6L866,634.3" stroke="#1e2418" stroke-width="1" opacity="0.1" fill="none"/>
<path d="M450.0,484.6h8M454.0,480.6v8M451.0,512.0h8M455.0,508.0v8M452.0,539.5h8M456.0,535.5v8M453.0,566.9h8M457.0,562.9v8M454.0,594.4h8M458.0,590.4v8M455.0,621.9h8M459.0,617.9v8M464.3,126.5h8M468.3,122.5v8M465.3,154.0h8M469.3,150.0v8M466.3,181.4h8M470.3,177.4v8M467.4,208.9h8M471.4,204.9v8M468.4,236.4h8M472.4,232.4v8M469.4,263.8h8M473.4,259.8v8M470.4,291.3h8M474.4,287.3v8M471.4,318.8h8M475.4,314.8v8M472.4,346.2h8M476.4,342.2v8M473.5,373.7h8M477.5,369.7v8M474.5,401.1h8M478.5,397.1v8M475.5,428.6h8M479.5,424.6v8M476.5,456.1h8M480.5,452.1v8M477.5,483.5h8M481.5,479.5v8M478.5,511.0h8M482.5,507.0v8M479.6,538.5h8M483.6,534.5v8M480.6,565.9h8M484.6,561.9v8M481.6,593.4h8M485.6,589.4v8M482.6,620.8h8M486.6,616.8v8M491.9,125.5h8M495.9,121.5v8M492.9,153.0h8M496.9,149.0v8M493.9,180.4h8M497.9,176.4v8M494.9,207.9h8M498.9,203.9v8M495.9,235.4h8M499.9,231.4v8M497.0,262.8h8M501.0,258.8v8M498.0,290.3h8M502.0,286.3v8M499.0,317.7h8M503.0,313.7v8M500.0,345.2h8M504.0,341.2v8M501.0,372.7h8M505.0,368.7v8M502.0,400.1h8M506.0,396.1v8M503.1,427.6h8M507.1,423.6v8M504.1,455.1h8M508.1,451.1v8M505.1,482.5h8M509.1,478.5v8M506.1,510.0h8M510.1,506.0v8M507.1,537.4h8M511.1,533.4v8M508.1,564.9h8M512.1,560.9v8M509.2,592.4h8M513.2,588.4v8M510.2,619.8h8M514.2,615.8v8M520.5,151.9h8M524.5,147.9v8M521.5,179.4h8M525.5,175.4v8M522.5,206.9h8M526.5,202.9v8M523.5,234.3h8M527.5,230.3v8M524.5,261.8h8M528.5,257.8v8M525.5,289.3h8M529.5,285.3v8M526.6,316.7h8M530.6,312.7v8M527.6,344.2h8M531.6,340.2v8M528.6,371.6h8M532.6,367.6v8M529.6,399.1h8M533.6,395.1v8M530.6,426.6h8M534.6,422.6v8M531.6,454.0h8M535.6,450.0v8M532.6,481.5h8M536.6,477.5v8M533.7,509.0h8M537.7,505.0v8M534.7,536.4h8M538.7,532.4v8M535.7,563.9h8M539.7,559.9v8M536.7,591.3h8M540.7,587.3v8M537.7,618.8h8M541.7,614.8v8M548.0,150.9h8M552.0,146.9v8M549.0,178.4h8M553.0,174.4v8M550.1,205.9h8M554.1,201.9v8M551.1,233.3h8M555.1,229.3v8M552.1,260.8h8M556.1,256.8v8M553.1,288.2h8M557.1,284.2v8M554.1,315.7h8M558.1,311.7v8M555.1,343.2h8M559.1,339.2v8M556.1,370.6h8M560.1,366.6v8M557.2,398.1h8M561.2,394.1v8M558.2,425.5h8M562.2,421.5v8M559.2,453.0h8M563.2,449.0v8M560.2,480.5h8M564.2,476.5v8M561.2,507.9h8M565.2,503.9v8M562.2,535.4h8M566.2,531.4v8M563.3,562.9h8M567.3,558.9v8M564.3,590.3h8M568.3,586.3v8M565.3,617.8h8M569.3,613.8v8M575.6,149.9h8M579.6,145.9v8M576.6,177.4h8M580.6,173.4v8M577.6,204.8h8M581.6,200.8v8M578.6,232.3h8M582.6,228.3v8M579.6,259.8h8M583.6,255.8v8M580.7,287.2h8M584.7,283.2v8M581.7,314.7h8M585.7,310.7v8M582.7,342.1h8M586.7,338.1v8M583.7,369.6h8M587.7,365.6v8M584.7,397.1h8M588.7,393.1v8M585.7,424.5h8M589.7,420.5v8M586.8,452.0h8M590.8,448.0v8M587.8,479.5h8M591.8,475.5v8M588.8,506.9h8M592.8,502.9v8M589.8,534.4h8M593.8,530.4v8M590.8,561.8h8M594.8,557.8v8M591.8,589.3h8M595.8,585.3v8M592.9,616.8h8M596.9,612.8v8M603.1,148.9h8M607.1,144.9v8M604.2,176.3h8M608.2,172.3v8M605.2,203.8h8M609.2,199.8v8M606.2,231.3h8M610.2,227.3v8M607.2,258.7h8M611.2,254.7v8M608.2,286.2h8M612.2,282.2v8M609.2,313.7h8M613.2,309.7v8M610.3,341.1h8M614.3,337.1v8M611.3,368.6h8M615.3,364.6v8M612.3,396.0h8M616.3,392.0v8M613.3,423.5h8M617.3,419.5v8M614.3,451.0h8M618.3,447.0v8M615.3,478.4h8M619.3,474.4v8M616.4,505.9h8M620.4,501.9v8M617.4,533.4h8M621.4,529.4v8M618.4,560.8h8M622.4,556.8v8M619.4,588.3h8M623.4,584.3v8M620.4,615.7h8M624.4,611.7v8M630.7,147.9h8M634.7,143.9v8M631.7,175.3h8M635.7,171.3v8M632.7,202.8h8M636.7,198.8v8M633.8,230.3h8M637.8,226.3v8M634.8,257.7h8M638.8,253.7v8M635.8,285.2h8M639.8,281.2v8M636.8,312.6h8M640.8,308.6v8M637.8,340.1h8M641.8,336.1v8M638.8,367.6h8M642.8,363.6v8M639.9,395.0h8M643.9,391.0v8M640.9,422.5h8M644.9,418.5v8M641.9,450.0h8M645.9,446.0v8M642.9,477.4h8M646.9,473.4v8M643.9,504.9h8M647.9,500.9v8M644.9,532.3h8M648.9,528.3v8M645.9,559.8h8M649.9,555.8v8M647.0,587.3h8M651.0,583.3v8M648.0,614.7h8M652.0,610.7v8M658.3,146.8h8M662.3,142.8v8M659.3,174.3h8M663.3,170.3v8M660.3,201.8h8M664.3,197.8v8M661.3,229.2h8M665.3,225.2v8M662.3,256.7h8M666.3,252.7v8M663.3,284.2h8M667.3,280.2v8M664.4,311.6h8M668.4,307.6v8M665.4,339.1h8M669.4,335.1v8M666.4,366.5h8M670.4,362.5v8M667.4,394.0h8M671.4,390.0v8M668.4,421.5h8M672.4,417.5v8M669.4,448.9h8M673.4,444.9v8M670.5,476.4h8M674.5,472.4v8M671.5,503.9h8M675.5,499.9v8M672.5,531.3h8M676.5,527.3v8M673.5,558.8h8M677.5,554.8v8M674.5,586.2h8M678.5,582.2v8M675.5,613.7h8M679.5,609.7v8M685.8,145.8h8M689.8,141.8v8M686.8,173.3h8M690.8,169.3v8M687.9,200.8h8M691.9,196.8v8M688.9,228.2h8M692.9,224.2v8M689.9,255.7h8M693.9,251.7v8M690.9,283.1h8M694.9,279.1v8M691.9,310.6h8M695.9,306.6v8M692.9,338.1h8M696.9,334.1v8M694.0,365.5h8M698.0,361.5v8M695.0,393.0h8M699.0,389.0v8M696.0,420.5h8M700.0,416.5v8M697.0,447.9h8M701.0,443.9v8M698.0,475.4h8M702.0,471.4v8M699.0,502.8h8M703.0,498.8v8M700.1,530.3h8M704.1,526.3v8M701.1,557.8h8M705.1,553.8v8M702.1,585.2h8M706.1,581.2v8M703.1,612.7h8M707.1,608.7v8M713.4,144.8h8M717.4,140.8v8M714.4,172.3h8M718.4,168.3v8M715.4,199.7h8M719.4,195.7v8M716.4,227.2h8M720.4,223.2v8M717.5,254.7h8M721.5,250.7v8M718.5,282.1h8M722.5,278.1v8M719.5,309.6h8M723.5,305.6v8M720.5,337.0h8M724.5,333.0v8M721.5,364.5h8M725.5,360.5v8M722.5,392.0h8M726.5,388.0v8M723.6,419.4h8M727.6,415.4v8M724.6,446.9h8M728.6,442.9v8M725.6,474.4h8M729.6,470.4v8M726.6,501.8h8M730.6,497.8v8M727.6,529.3h8M731.6,525.3v8M728.6,556.7h8M732.6,552.7v8M729.6,584.2h8M733.6,580.2v8M730.7,611.7h8M734.7,607.7v8M741.0,143.8h8M745.0,139.8v8M742.0,171.2h8M746.0,167.2v8M743.0,198.7h8M747.0,194.7v8M744.0,226.2h8M748.0,222.2v8M745.0,253.6h8M749.0,249.6v8M746.0,281.1h8M750.0,277.1v8M747.1,308.6h8M751.1,304.6v8M748.1,336.0h8M752.1,332.0v8M749.1,363.5h8M753.1,359.5v8M750.1,390.9h8M754.1,386.9v8M751.1,418.4h8M755.1,414.4v8M752.1,445.9h8M756.1,441.9v8M753.1,473.3h8M757.1,469.3v8M754.2,500.8h8M758.2,496.8v8M755.2,528.3h8M759.2,524.3v8M756.2,555.7h8M760.2,551.7v8M757.2,583.2h8M761.2,579.2v8M758.2,610.6h8M762.2,606.6v8M768.5,142.8h8M772.5,138.8v8M769.5,170.2h8M773.5,166.2v8M770.5,197.7h8M774.5,193.7v8M771.6,225.2h8M775.6,221.2v8M772.6,252.6h8M776.6,248.6v8M773.6,280.1h8M777.6,276.1v8M774.6,307.5h8M778.6,303.5v8M775.6,335.0h8M779.6,331.0v8M776.6,362.5h8M780.6,358.5v8M777.7,389.9h8M781.7,385.9v8M778.7,417.4h8M782.7,413.4v8M779.7,444.9h8M783.7,440.9v8M780.7,472.3h8M784.7,468.3v8M781.7,499.8h8M785.7,495.8v8M782.7,527.2h8M786.7,523.2v8M783.8,554.7h8M787.8,550.7v8M784.8,582.2h8M788.8,578.2v8M785.8,609.6h8M789.8,605.6v8M796.1,141.7h8M800.1,137.7v8M797.1,169.2h8M801.1,165.2v8M798.1,196.7h8M802.1,192.7v8M799.1,224.1h8M803.1,220.1v8M800.1,251.6h8M804.1,247.6v8M801.2,279.1h8M805.2,275.1v8M802.2,306.5h8M806.2,302.5v8M803.2,334.0h8M807.2,330.0v8M804.2,361.4h8M808.2,357.4v8M805.2,388.9h8M809.2,384.9v8M806.2,416.4h8M810.2,412.4v8M807.3,443.8h8M811.3,439.8v8M808.3,471.3h8M812.3,467.3v8M809.3,498.8h8M813.3,494.8v8M810.3,526.2h8M814.3,522.2v8M811.3,553.7h8M815.3,549.7v8M812.3,581.1h8M816.3,577.1v8M813.4,608.6h8M817.4,604.6v8M823.6,140.7h8M827.6,136.7v8M824.7,168.2h8M828.7,164.2v8M825.7,195.7h8M829.7,191.7v8M826.7,223.1h8M830.7,219.1v8M827.7,250.6h8M831.7,246.6v8M828.7,278.0h8M832.7,274.0v8M829.7,305.5h8M833.7,301.5v8M830.8,333.0h8M834.8,329.0v8M831.8,360.4h8M835.8,356.4v8M832.8,387.9h8M836.8,383.9v8M833.8,415.4h8M837.8,411.4v8M834.8,442.8h8M838.8,438.8v8M835.8,470.3h8M839.8,466.3v8M836.9,497.7h8M840.9,493.7v8M837.9,525.2h8M841.9,521.2v8M838.9,552.7h8M842.9,548.7v8M839.9,580.1h8M843.9,576.1v8M840.9,607.6h8M844.9,603.6v8M841.9,635.1h8M845.9,631.1v8M851.2,139.7h8M855.2,135.7v8M852.2,167.2h8M856.2,163.2v8M853.2,194.6h8M857.2,190.6v8M854.3,222.1h8M858.3,218.1v8M855.3,249.6h8M859.3,245.6v8M856.3,277.0h8M860.3,273.0v8M857.3,304.5h8M861.3,300.5v8M858.3,331.9h8M862.3,327.9v8M859.3,359.4h8M863.3,355.4v8M860.3,386.9h8M864.3,382.9v8M861.4,414.3h8M865.4,410.3v8" stroke="#1e2418" stroke-width="1.1" opacity="0.3" fill="none"/>
</g>
<g fill="none" stroke="#25221e">
<path d="M451,113 H878.5" stroke-width="1.4"/>
<path d="M451,115 H864" stroke-width="0.8" stroke-dasharray="5 1" opacity="0.8"/>
<path d="M453,125.5 H877" stroke-width="1"/>
<path d="M865.5,113 V636" stroke-width="1"/>
<path d="M876.2,113 V646" stroke-width="0.9"/>
<path d="M878.6,112.5 V649" stroke-width="1.5"/>
<path d="M453,635.5 H866" stroke-width="1"/>
<path d="M451,645.8 H877" stroke-width="0.9" opacity="0.8"/>
<path d="M451,648.5 H879" stroke-width="1.4"/>
<path d="M453.2,125 V636" stroke-width="0.8" opacity="0.7"/>
</g>
<path d="M468.0,115V125 M461.4,636V646 M495.6,115V125 M489.0,636V646 M523.2,115V125 M516.6,636V646 M550.8,115V125 M544.2,636V646 M578.4,115V125 M571.8,636V646 M606.0,115V125 M599.4,636V646 M633.6,115V125 M627.0,636V646 M661.2,115V125 M654.6,636V646 M688.8,115V125 M682.2,636V646 M716.4,115V125 M709.8,636V646 M744.0,115V125 M737.4,636V646 M771.6,115V125 M765.0,636V646 M799.2,115V125 M792.6,636V646 M826.8,115V125 M820.2,636V646 M854.4,115V125 M847.8,636V646 M866,139.9H876 M866,167.4H876 M866,194.9H876 M866,222.4H876 M866,249.9H876 M866,277.4H876 M866,304.9H876 M866,332.4H876 M866,359.9H876 M866,387.4H876 M866,414.9H876 M866,442.4H876 M866,469.9H876 M866,497.4H876 M866,524.9H876 M866,552.4H876 M866,579.9H876 M866,607.4H876 M866,634.9H876" stroke="#25221e" stroke-width="0.8" opacity="0.7"/>
<g font-family="Liberation Sans" font-size="6" font-weight="bold" fill="#2a2622" opacity="0.85"><text x="469.0" y="121">22</text><text x="462.4" y="643">22</text><text x="496.6" y="121">24</text><text x="490.0" y="643">24</text><text x="524.2" y="121">26</text><text x="517.6" y="643">26</text><text x="551.8" y="121">28</text><text x="545.2" y="643">28</text><text x="579.4" y="121">30</text><text x="572.8" y="643">30</text><text x="607.0" y="121">32</text><text x="600.4" y="643">32</text><text x="634.6" y="121">34</text><text x="628.0" y="643">34</text><text x="662.2" y="121">36</text><text x="655.6" y="643">36</text><text x="689.8" y="121">38</text><text x="683.2" y="643">38</text><text x="717.4" y="121">40</text><text x="710.8" y="643">40</text><text x="745.0" y="121">42</text><text x="738.4" y="643">42</text><text x="772.6" y="121">44</text><text x="766.0" y="643">44</text><text x="800.2" y="121">46</text><text x="793.6" y="643">46</text><text x="827.8" y="121">48</text><text x="821.2" y="643">48</text><text x="855.4" y="121">50</text><text x="848.8" y="643">50</text><text x="867" y="138.9">80</text><text x="867" y="166.4">78</text><text x="867" y="193.9">76</text><text x="867" y="221.4">74</text><text x="867" y="248.9">72</text><text x="867" y="276.4">70</text><text x="867" y="303.9">68</text><text x="867" y="331.4">66</text><text x="867" y="358.9">64</text><text x="867" y="386.4">62</text><text x="867" y="413.9">60</text><text x="867" y="441.4">58</text><text x="867" y="468.9">56</text><text x="867" y="496.4">54</text><text x="867" y="523.9">52</text><text x="867" y="551.4">50</text><text x="867" y="578.9">48</text><text x="867" y="606.4">46</text><text x="867" y="633.9">44</text></g>
<g font-family="Liberation Serif" fill="#2a2622" clip-path="url(#mapclip)">
<text x="455" y="109.5" font-size="7.6" font-weight="bold" textLength="93" lengthAdjust="spacingAndGlyphs">СССР 1:100000 Ивановская, Костромская области</text>
<text x="583" y="107.5" font-size="9" font-weight="bold" textLength="22" lengthAdjust="spacingAndGlyphs">НАРЕШМА</text>
<text x="789" y="106.5" font-size="9" font-weight="bold" fill="#5a7ab8" textLength="29" lengthAdjust="spacingAndGlyphs">О-38-085</text>
<text x="828" y="107" font-size="12" font-weight="bold" textLength="36" lengthAdjust="spacingAndGlyphs">О-38-85</text>
<text x="806" y="112" font-size="5" textLength="58" lengthAdjust="spacingAndGlyphs">Ивановская обл. 1:100000 Кострома 1990 г.</text>
<text x="645" y="661.5" font-size="9.5" font-weight="bold" font-family="Liberation Sans" textLength="29" lengthAdjust="spacingAndGlyphs">1:100 000</text>
<text x="642" y="666.5" font-size="4.5" textLength="34" lengthAdjust="spacingAndGlyphs">в 1 сантиметре 1 километр</text>
<text x="453" y="656.5" font-size="4.8" textLength="87" lengthAdjust="spacingAndGlyphs">Склонение на 1990 г. восточное 10°24' Сближение меридианов</text>
<text x="805" y="656.5" font-size="4.8" textLength="61" lengthAdjust="spacingAndGlyphs">Сплошные горизонтали через 20 метров</text>
<text x="453" y="660.5" font-size="4.8" textLength="87" lengthAdjust="spacingAndGlyphs">Склонение на 1990 г. восточное 10°24' Сближение меридианов</text>
<text x="805" y="660.5" font-size="4.8" textLength="61" lengthAdjust="spacingAndGlyphs">Сплошные горизонтали через 20 метров</text>
<text x="453" y="664.5" font-size="4.8" textLength="87" lengthAdjust="spacingAndGlyphs">Склонение на 1990 г. восточное 10°24' Сближение меридианов</text>
<text x="805" y="664.5" font-size="4.8" textLength="61" lengthAdjust="spacingAndGlyphs">Сплошные горизонтали через 20 метров</text>
<text x="732" y="657.5" font-size="4.8" opacity="0.6" textLength="46" lengthAdjust="spacingAndGlyphs">Система высот Балтийская</text>
<text x="732" y="662" font-size="4.8" opacity="0.6" textLength="46" lengthAdjust="spacingAndGlyphs">Масштаб 1:100000 в 1 см</text>
<text x="470" y="639" font-size="5" textLength="20" lengthAdjust="spacingAndGlyphs">Решма 3км</text>
<text transform="translate(886,636) rotate(-90)" font-size="5" textLength="36" lengthAdjust="spacingAndGlyphs">Кинешма 12 км</text>
</g>
</g>
</svg>
<!--/MAP-->
<svg class="abs" style="left:0;top:0" width="1346" height="102" viewBox="0 0 1346 102">
  <defs>
    <pattern id="gp" x="0" y="0" width="3" height="3" patternUnits="userSpaceOnUse">
      <rect x="1" y="1" width="1" height="1" fill="#fff"/>
      <rect x="0" y="0" width="1" height="1" fill="#ababab"/>
    </pattern>
    <linearGradient id="scr" x1="0" y1="0" x2="0" y2="1"><stop offset="0" stop-color="#f4f4f2"/><stop offset="1" stop-color="#dcdcd8"/></linearGradient>
    <linearGradient id="bb" x1="0" y1="0" x2="0" y2="1"><stop offset="0" stop-color="#9fb6d6"/><stop offset="0.5" stop-color="#2f5d9e"/><stop offset="1" stop-color="#2a5597"/></linearGradient>
    <linearGradient id="gb" x1="0" y1="0" x2="0" y2="1"><stop offset="0" stop-color="#7a9aad"/><stop offset="0.5" stop-color="#7a9aad"/><stop offset="0.5" stop-color="#3c5e78"/><stop offset="1" stop-color="#3c5e78"/></linearGradient>
    <linearGradient id="gear" gradientUnits="userSpaceOnUse" x1="-8" y1="-9" x2="8" y2="9"><stop offset="0" stop-color="#fff7b0"/><stop offset="0.4" stop-color="#f7e84a"/><stop offset="0.45" stop-color="#f2dc1a"/><stop offset="1" stop-color="#e2c600"/></linearGradient>
    <linearGradient id="lens" x1="0" y1="0" x2="1" y2="1"><stop offset="0" stop-color="#fbfbfb"/><stop offset="1" stop-color="#e2e2e2"/></linearGradient>
    <linearGradient id="hg" x1="0" y1="0" x2="0" y2="1"><stop offset="0" stop-color="#c6f0a8"/><stop offset="1" stop-color="#66d02a"/></linearGradient>
    <linearGradient id="hgr" x1="0" y1="0" x2="0" y2="1"><stop offset="0" stop-color="#f0f0ee"/><stop offset="1" stop-color="#c8c8c4"/></linearGradient>
    <g id="gcp">
      <path d="M136,72.8 L145.6,77.4 L153.6,70 L160,70 L160,72.6 L136,90.2 L136,82.4 L141.4,78.8 L136,76 Z" fill="#989898"/>
      <path d="M142,79.5 H149 M145.5,76 V83" stroke="#fff" stroke-width="1.1"/>
    </g>
  </defs>
  <!-- grips -->
  <rect x="8" y="74" width="6" height="18" fill="url(#gp)"/>
  <rect x="249" y="74" width="6" height="18" fill="url(#gp)"/>
  <rect x="366" y="74" width="6" height="18" fill="url(#gp)"/>
  <rect x="657" y="74" width="6" height="18" fill="url(#gp)"/>
  <!-- separators -->
  <g fill="#d2d2d2"><rect x="53" y="73" width="1" height="19"/><rect x="127" y="73" width="1" height="19"/><rect x="201" y="73" width="1" height="19"/><rect x="575" y="73" width="1" height="19"/></g>
  <g fill="#fff"><rect x="54" y="73" width="1" height="19"/><rect x="128" y="73" width="1" height="19"/><rect x="202" y="73" width="1" height="19"/><rect x="576" y="73" width="1" height="19"/></g>
  <!-- add raster -->
  <rect x="21" y="70" width="19.5" height="19.5" fill="#6e9bca"/>
  <g fill="#243c5e"><rect x="21" y="70" width="6.5" height="6.5"/><rect x="34" y="70" width="6.5" height="6.5"/><rect x="27.5" y="76.5" width="6.5" height="6.5"/><rect x="21" y="83" width="6.5" height="6.5"/></g>
  <rect x="34" y="83" width="12" height="12" fill="#f3f3f3"/>
  <rect x="36.2" y="85.2" width="8.8" height="8.8" rx="2" fill="#4f8b4a"/>
  <path d="M37.8,89.6 H43.4 M40.6,86.8 V92.4" stroke="#fff" stroke-width="1.5"/>
  <!-- play -->
  <path d="M66.3,72 L81.8,82 L66.3,91.8 Z" fill="#5a8f56" stroke="#3f7b3f" stroke-width="0.8" stroke-linejoin="round"/>
  <path d="M67.6,74 V89.8" stroke="#c9dcc6" stroke-width="0.9"/>
  <!-- script -->
  <path d="M98.3,88.5 V74 C98.3,72 99.5,71.3 101,71.3 H116" fill="url(#scr)" stroke="#8c8c8c" stroke-width="1"/>
  <rect x="98.3" y="71.8" width="16.4" height="17" fill="url(#scr)"/>
  <path d="M98.3,88.5 V74 C98.3,72 99.5,71.3 101,71.3 H116" fill="none" stroke="#8c8c8c" stroke-width="1"/>
  <path d="M114.7,88.5 V74" stroke="#8c8c8c" stroke-width="1"/>
  <circle cx="116" cy="73.6" r="2.1" fill="#e4e4e2" stroke="#8c8c8c" stroke-width="1"/>
  <rect x="95.6" y="88.2" width="16" height="4.5" rx="2.2" fill="#e6e6e4" stroke="#8c8c8c" stroke-width="1"/>
  <rect x="108.2" y="83.1" width="10.6" height="10.6" rx="1.2" fill="url(#bb)"/>
  <path d="M113.5,84.5 V90 M110.8,87.2 L113.5,90 L116.2,87.2" fill="none" stroke="#fff" stroke-width="1.3"/>
  <path d="M110.5,89.5 V91.8 H116.5 V89.5" fill="none" stroke="#fff" stroke-width="1.1"/>
  <!-- gcp load/save -->
  <use href="#gcp"/>
  <rect x="149" y="83" width="11" height="11" rx="2.2" fill="url(#gb)"/>
  <path d="M154.5,91 V85.5 M152.3,87.6 L154.5,85.4 L156.7,87.6" fill="none" stroke="#fff" stroke-width="1.1"/>
  <path d="M151.5,89.5 V92 H157.5 V89.5" fill="none" stroke="#fff" stroke-width="1.1"/>
  <use href="#gcp" x="33"/>
  <rect x="182" y="83" width="11" height="11" rx="2.2" fill="url(#gb)"/>
  <path d="M187.5,85 V90.5 M185.3,88.3 L187.5,90.5 L189.7,88.3" fill="none" stroke="#fff" stroke-width="1.1"/>
  <path d="M184.5,89.5 V92 H190.5 V89.5" fill="none" stroke="#fff" stroke-width="1.1"/>
  <!-- gear -->
  <g transform="translate(222,82)">
    <path d="M-2.80,-6.74 L-2.80,-10.60 L2.80,-10.60 L2.80,-6.74 L2.79,-6.75 L5.52,-9.48 L9.48,-5.52 L6.75,-2.79 L6.74,-2.80 L10.60,-2.80 L10.60,2.80 L6.74,2.80 L6.75,2.79 L9.48,5.52 L5.52,9.48 L2.79,6.75 L2.80,6.74 L2.80,10.60 L-2.80,10.60 L-2.80,6.74 L-2.79,6.75 L-5.52,9.48 L-9.48,5.52 L-6.75,2.79 L-6.74,2.80 L-10.60,2.80 L-10.60,-2.80 L-6.74,-2.80 L-6.75,-2.79 L-9.48,-5.52 L-5.52,-9.48 L-2.79,-6.75Z" fill="url(#gear)" stroke="#c4a000" stroke-width="1" stroke-linejoin="round"/>
    <circle r="2.9" fill="#fbfbfb" stroke="#c4a000" stroke-width="1.1"/>
  </g>
  <!-- checked button -->
  <rect x="257.5" y="67.5" width="31" height="30" rx="3" fill="#dcdcdc" stroke="#a9a9a9" stroke-width="1"/>
  <use href="#gcp" x="125"/>
  <rect x="274" y="83" width="11" height="11" rx="2.2" fill="#c9a10a"/>
  <g stroke="#fff" stroke-width="1.1" transform="translate(279.5,88.5)"><path d="M0,-4.6 V4.6 M-4,-2.3 L4,2.3 M-4,2.3 L4,-2.3"/><circle r="1.8" fill="#c9a10a" stroke-width="1"/></g>
  <!-- delete -->
  <use href="#gcp" x="158"/>
  <rect x="308" y="84" width="10" height="10" rx="2.2" fill="#d65b5b"/>
  <path d="M309.8,85.8 L316.2,92.2 M316.2,85.8 L309.8,92.2" stroke="#fff" stroke-width="1.3"/>
  <!-- move -->
  <use href="#gcp" x="191"/>
  <rect x="340" y="83" width="11" height="11" rx="2.2" fill="#3d5f78"/>
  <path d="M342.5,87.3 H346.3 V85 L350,88.5 L346.3,92 V89.7 H342.5 Z" fill="#f0f0f0"/>
  <!-- hand -->
  <g transform="translate(376,66)">
    <path d="M5.6,12.8 C5.4,10.8 8,9.8 9.2,11.4 L10.4,14 L10.4,5.8 C10.4,3.9 13.8,3.9 13.8,5.8 C14.6,4.8 17,5.4 17,7.2 C17.8,6.8 20.3,7.4 20.3,8.9 C21,8.4 22.9,9 22.9,10.4 L22.9,17.5 L21.2,23 L20.6,26.5 L12.1,26.5 L10.6,22.8 L6.6,16 Z" fill="#fff" stroke="#1a1a1a" stroke-width="1.15" stroke-linejoin="round"/>
    <path d="M13.8,5.8 V12.4 M17,7.2 V12 M20.3,8.9 V12.8" stroke="#333" stroke-width="1"/>
  </g>
  <!-- zoom in -->
  <g transform="translate(408,66)">
    <path d="M4.3,26.2 L10,20.6" stroke="#333" stroke-width="3.6" stroke-linecap="butt"/>
    <path d="M4.8,25.7 L9.6,21" stroke="#f5d21a" stroke-width="2.2"/>
    <path d="M9.8,20.8 L12.6,18" stroke="#000" stroke-width="3"/>
    <circle cx="17.4" cy="13.4" r="8" fill="url(#lens)" stroke="#4d4d4d" stroke-width="1.1"/>
    <path d="M17.6,8.4 V18.6 M12.5,13.5 H22.7" stroke="#3d6ea8" stroke-width="3"/>
    <path d="M17.6,8.9 V18.1 M13,13.5 H22.2" stroke="#6a9bd0" stroke-width="1.8"/>
  </g>
  <!-- zoom out -->
  <g transform="translate(441,66)">
    <path d="M4.3,26.2 L10,20.6" stroke="#333" stroke-width="3.6"/>
    <path d="M4.8,25.7 L9.6,21" stroke="#f5d21a" stroke-width="2.2"/>
    <path d="M9.8,20.8 L12.6,18" stroke="#000" stroke-width="3"/>
    <circle cx="17.4" cy="13.4" r="8" fill="url(#lens)" stroke="#4d4d4d" stroke-width="1.1"/>
    <path d="M12.5,13.5 H22.7" stroke="#3d6ea8" stroke-width="3"/>
    <path d="M13,13.5 H22.2" stroke="#6a9bd0" stroke-width="1.8"/>
  </g>
  <!-- zoom to layer -->
  <g transform="translate(474,66)">
    <rect x="5.3" y="6.2" width="7.5" height="12.8" fill="#f2f2f2" stroke="#8a8a8a" stroke-width="1"/>
    <path d="M4.3,26.2 L10,20.6" stroke="#333" stroke-width="3.6"/>
    <path d="M4.8,25.7 L9.6,21" stroke="#f5d21a" stroke-width="2.2"/>
    <path d="M9.8,20.8 L12.6,18" stroke="#000" stroke-width="3"/>
    <circle cx="18.2" cy="12.9" r="8.3" fill="url(#lens)" stroke="#4d4d4d" stroke-width="1.1"/>
    <path d="M17.6,6 V20" stroke="#bcbcbc" stroke-width="1"/>
  </g>
  <!-- zoom last / next (disabled) -->
  <g transform="translate(507,66)" opacity="0.55">
    <path d="M4.3,26.2 L10,20.6" stroke="#bdbdbd" stroke-width="3.4"/>
    <path d="M4.8,25.7 L9.6,21" stroke="#e8e6dc" stroke-width="2"/>
    <circle cx="17.4" cy="13.4" r="8" fill="#f4f4f4" stroke="#9a9a9a" stroke-width="1"/>
    <rect x="16" y="17" width="11" height="11" fill="#c9ccd0"/>
    <path d="M24,19.5 L19.5,22.5 L24,25.5" fill="none" stroke="#fff" stroke-width="1.4"/>
  </g>
  <g transform="translate(540,66)" opacity="0.55">
    <path d="M4.3,26.2 L10,20.6" stroke="#bdbdbd" stroke-width="3.4"/>
    <path d="M4.8,25.7 L9.6,21" stroke="#e8e6dc" stroke-width="2"/>
    <circle cx="17.4" cy="13.4" r="8" fill="#f4f4f4" stroke="#9a9a9a" stroke-width="1"/>
    <rect x="16" y="17" width="11" height="11" fill="#c9ccd0"/>
    <path d="M19.5,19.5 L24,22.5 L19.5,25.5" fill="none" stroke="#fff" stroke-width="1.4"/>
  </g>
  <!-- link (disabled) -->
  <g opacity="0.35">
    <circle cx="590.5" cy="82.5" r="5" fill="#dfe4ea" stroke="#b8c0b0" stroke-width="1"/>
    <path d="M595,82 H601" stroke="#a8acc8" stroke-width="2.5"/>
    <path d="M599,88.5 L607,75 L607,87 M601,84 H607" fill="none" stroke="#7c8c70" stroke-width="1.6"/>
    <circle cx="623.5" cy="82.5" r="5" fill="#dfe4ea" stroke="#b8c0b0" stroke-width="1"/>
    <path d="M628,82 H634" stroke="#a8acc8" stroke-width="2.5"/>
    <path d="M632,88.5 L640,75 L640,87 M634,84 H640" fill="none" stroke="#7c8c70" stroke-width="1.6"/>
  </g>
  <!-- histogram stretch -->
  <g>
    <path d="M668.3,92.8 C668.5,82 669,72.5 671.5,71.2 C673.5,71.5 676,74 677.5,76.5 L677.5,92.8 Z" fill="url(#hg)" stroke="#62b832" stroke-width="0.8"/>
    <path d="M676.7,92.8 C677,82 677.5,71.2 678.6,71.2 C680,71.5 681.5,80 683.5,86.5 C685,90.5 688,92.5 692,92.8 Z" fill="url(#hgr)" stroke="#8e8e8a" stroke-width="0.8"/>
    <path d="M683.5,86.5 C685,90.5 688,92.5 692,92.8" fill="none" stroke="#66c030" stroke-width="1"/>
    <path d="M668.3,81.5 L672.8,77 V80 H686.5 V77 L691.3,81.5 L686.5,86 V83 H672.8 V86 Z" fill="#dfe6d8" stroke="#555" stroke-width="0.9" stroke-linejoin="miter"/>
  </g>
  <g transform="translate(33,0)">
    <path d="M668.3,92.8 C668.5,82 669,72.5 671.5,71.2 C673.5,71.5 676,74 677.5,76.5 L677.5,92.8 Z" fill="url(#hg)" stroke="#62b832" stroke-width="0.8"/>
    <path d="M676.7,92.8 C677,82 677.5,71.2 678.6,71.2 C680,71.5 681.5,80 683.5,86.5 C685,90.5 688,92.5 692,92.8 Z" fill="url(#hgr)" stroke="#8e8e8a" stroke-width="0.8"/>
    <path d="M683.5,86.5 C685,90.5 688,92.5 692,92.8" fill="none" stroke="#66c030" stroke-width="1"/>
  </g>
</svg>

</body></html>
